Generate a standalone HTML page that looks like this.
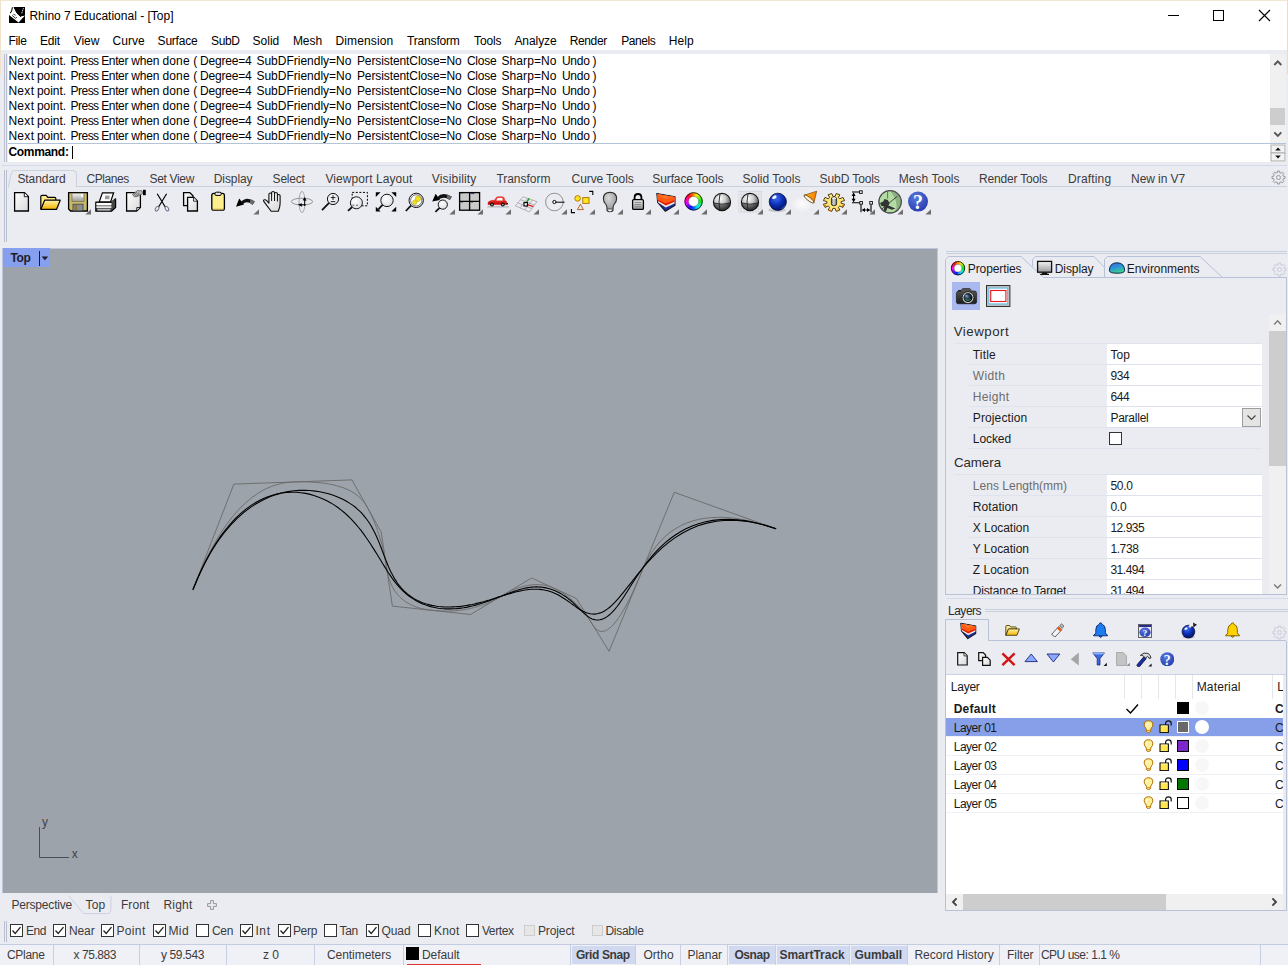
<!DOCTYPE html><html><head><meta charset="utf-8"><title>Rhino 7 Educational - [Top]</title><style>
html,body{margin:0;padding:0}body{width:1288px;height:965px;position:relative;overflow:hidden;background:#ebecf1;font-family:"Liberation Sans", sans-serif;font-size:12px}
body>div,body>svg,body>span{position:absolute;display:block}
span.t{white-space:pre;line-height:14px;height:14px}
</style></head><body>
<div style="left:0px;top:0px;width:1288px;height:50px;background:#fff;"></div>
<div style="left:0px;top:0px;width:1288px;height:1px;background:#f3e6d3;"></div>
<div style="left:0px;top:0px;width:1px;height:74px;background:#f1e2cc;"></div>
<div style="left:1287px;top:0px;width:1px;height:74px;background:#eadcc8;"></div>
<svg style="left:1160px;top:5px;" width="120" height="22" viewBox="0 0 120 22"><path d="M8 10.5H19" stroke="#000" stroke-width="1" fill="none"/><rect x="53.5" y="5.5" width="10" height="10" fill="none" stroke="#000"/><path d="M99 5L110 16M110 5L99 16" stroke="#000" stroke-width="1.1" fill="none"/></svg>
<div style="left:4px;top:54px;width:1px;height:108px;background:#b9bfce;"></div>
<div style="left:6px;top:54px;width:1px;height:108px;background:#b9bfce;"></div>
<div style="left:8px;top:54px;width:1278px;height:90px;background:#fff;"></div>
<div style="left:8px;top:143px;width:1278px;height:1px;background:#b4c4d8;"></div>
<div style="left:8px;top:144px;width:1278px;height:18px;background:#fff;"></div>
<div style="left:72px;top:146px;width:1px;height:13px;background:#000;"></div>
<div style="left:1270px;top:54px;width:16px;height:89px;background:#f0f0f0;"></div>
<div style="left:1270px;top:108px;width:15px;height:17px;background:#cdcdcd;"></div>
<svg style="left:1270px;top:54px;" width="16" height="89" viewBox="0 0 16 89"><path d="M4.3 11L7.8 7.4L11.3 11" stroke="#555" stroke-width="1.9" fill="none"/><path d="M4.3 78.4L7.8 82L11.3 78.4" stroke="#555" stroke-width="1.9" fill="none"/></svg>
<svg style="left:1270px;top:144px;" width="16" height="18" viewBox="0 0 16 18"><rect x="1" y="1" width="14" height="8" fill="#f2f2f2" stroke="#adadad"/><rect x="1" y="9" width="14" height="8" fill="#f2f2f2" stroke="#adadad"/><path d="M5.2 6.6L8 3.4L10.8 6.6Z M5.2 11.4L8 14.6L10.8 11.4Z" fill="#111"/></svg>
<div style="left:2px;top:165px;width:1285px;height:1px;background:#d3dbeb;"></div>
<div style="left:4px;top:170px;width:1px;height:72px;background:#b9bfce;"></div>
<div style="left:6px;top:170px;width:1px;height:72px;background:#b9bfce;"></div>
<div style="left:76px;top:186px;width:1211px;height:1px;background:#c9d0de;"></div>
<svg style="left:8px;top:169px;" width="72" height="19" viewBox="0 0 72 19"><path d="M0.5 18.5 L0.5 17 L3.5 3.5 Q4.2 1.5 6.5 1.5 H65 Q68.5 1.5 68.5 5 V17.5" fill="none" stroke="#c9d0de"/></svg>
<div style="left:2px;top:248px;width:936px;height:645px;background:#bcc6de;"></div>
<div style="left:3px;top:249px;width:934px;height:643.5px;background:#9da3aa;"></div>
<div style="left:3px;top:248px;width:47px;height:19px;background:#869fee;"></div>
<div style="left:39px;top:251px;width:1px;height:15px;background:#1c1c28;"></div>
<svg style="left:41px;top:255px;" width="8" height="6" viewBox="0 0 8 6"><path d="M0.6 1.4H7.2L3.9 5.2Z" fill="#1c1c28"/></svg>
<div style="left:4px;top:921px;width:1px;height:21px;background:#b9bfce;"></div>
<div style="left:6px;top:921px;width:1px;height:21px;background:#b9bfce;"></div>
<div style="left:10px;top:924px;width:13px;height:13px;background:#fff;box-sizing:border-box;border:1px solid #333;"></div>
<svg style="left:10px;top:924px;" width="13" height="13" viewBox="0 0 13 13"><path d="M2.5 6.5L5.2 9.5L10.5 3.2" stroke="#222" stroke-width="1.3" fill="none"/></svg>
<div style="left:53px;top:924px;width:13px;height:13px;background:#fff;box-sizing:border-box;border:1px solid #333;"></div>
<svg style="left:53px;top:924px;" width="13" height="13" viewBox="0 0 13 13"><path d="M2.5 6.5L5.2 9.5L10.5 3.2" stroke="#222" stroke-width="1.3" fill="none"/></svg>
<div style="left:101px;top:924px;width:13px;height:13px;background:#fff;box-sizing:border-box;border:1px solid #333;"></div>
<svg style="left:101px;top:924px;" width="13" height="13" viewBox="0 0 13 13"><path d="M2.5 6.5L5.2 9.5L10.5 3.2" stroke="#222" stroke-width="1.3" fill="none"/></svg>
<div style="left:152.5px;top:924px;width:13px;height:13px;background:#fff;box-sizing:border-box;border:1px solid #333;"></div>
<svg style="left:152.5px;top:924px;" width="13" height="13" viewBox="0 0 13 13"><path d="M2.5 6.5L5.2 9.5L10.5 3.2" stroke="#222" stroke-width="1.3" fill="none"/></svg>
<div style="left:196px;top:924px;width:13px;height:13px;background:#fff;box-sizing:border-box;border:1px solid #333;"></div>
<div style="left:240px;top:924px;width:13px;height:13px;background:#fff;box-sizing:border-box;border:1px solid #333;"></div>
<svg style="left:240px;top:924px;" width="13" height="13" viewBox="0 0 13 13"><path d="M2.5 6.5L5.2 9.5L10.5 3.2" stroke="#222" stroke-width="1.3" fill="none"/></svg>
<div style="left:277.5px;top:924px;width:13px;height:13px;background:#fff;box-sizing:border-box;border:1px solid #333;"></div>
<svg style="left:277.5px;top:924px;" width="13" height="13" viewBox="0 0 13 13"><path d="M2.5 6.5L5.2 9.5L10.5 3.2" stroke="#222" stroke-width="1.3" fill="none"/></svg>
<div style="left:324px;top:924px;width:13px;height:13px;background:#fff;box-sizing:border-box;border:1px solid #333;"></div>
<div style="left:366px;top:924px;width:13px;height:13px;background:#fff;box-sizing:border-box;border:1px solid #333;"></div>
<svg style="left:366px;top:924px;" width="13" height="13" viewBox="0 0 13 13"><path d="M2.5 6.5L5.2 9.5L10.5 3.2" stroke="#222" stroke-width="1.3" fill="none"/></svg>
<div style="left:418px;top:924px;width:13px;height:13px;background:#fff;box-sizing:border-box;border:1px solid #333;"></div>
<div style="left:466px;top:924px;width:13px;height:13px;background:#fff;box-sizing:border-box;border:1px solid #333;"></div>
<div style="left:523.5px;top:925px;width:11px;height:11px;background:#e6e6e6;box-sizing:border-box;border:1px solid #cdcdcd;"></div>
<div style="left:592px;top:925px;width:11px;height:11px;background:#e6e6e6;box-sizing:border-box;border:1px solid #cdcdcd;"></div>
<div style="left:0px;top:945px;width:1288px;height:20px;background:#f0f1f6;"></div>
<div style="left:0px;top:944px;width:1288px;height:1px;background:#c4cce2;"></div>
<div style="left:572px;top:946px;width:63px;height:18px;background:#d0d9f0;"></div>
<div style="left:729px;top:946px;width:46px;height:18px;background:#d0d9f0;"></div>
<div style="left:777px;top:946px;width:72px;height:18px;background:#d0d9f0;"></div>
<div style="left:851px;top:946px;width:56px;height:18px;background:#d0d9f0;"></div>
<div style="left:53px;top:945px;width:1px;height:20px;background:#c8cfe2;"></div>
<div style="left:139px;top:945px;width:1px;height:20px;background:#c8cfe2;"></div>
<div style="left:226px;top:945px;width:1px;height:20px;background:#c8cfe2;"></div>
<div style="left:314px;top:945px;width:1px;height:20px;background:#c8cfe2;"></div>
<div style="left:403px;top:945px;width:1px;height:20px;background:#c8cfe2;"></div>
<div style="left:570px;top:945px;width:1px;height:20px;background:#c8cfe2;"></div>
<div style="left:635px;top:945px;width:1px;height:20px;background:#c8cfe2;"></div>
<div style="left:680px;top:945px;width:1px;height:20px;background:#c8cfe2;"></div>
<div style="left:727px;top:945px;width:1px;height:20px;background:#c8cfe2;"></div>
<div style="left:775px;top:945px;width:1px;height:20px;background:#c8cfe2;"></div>
<div style="left:849px;top:945px;width:1px;height:20px;background:#c8cfe2;"></div>
<div style="left:907px;top:945px;width:1px;height:20px;background:#c8cfe2;"></div>
<div style="left:999px;top:945px;width:1px;height:20px;background:#c8cfe2;"></div>
<div style="left:1039px;top:945px;width:1px;height:20px;background:#c8cfe2;"></div>
<div style="left:1260px;top:945px;width:1px;height:20px;background:#c8cfe2;"></div>
<div style="left:406px;top:947px;width:13px;height:13px;background:#000;"></div>
<div style="left:407px;top:963.5px;width:74px;height:1.5px;background:#e03030;"></div>
<div style="left:946px;top:251px;width:341px;height:1px;background:#c9d0de;"></div>
<div style="left:946px;top:253px;width:341px;height:1px;background:#c9d0de;"></div>
<svg style="left:945px;top:255px;" width="343" height="24" viewBox="0 0 343 24"><path d="M0.5 23 V4.4 L3.4 1.5 H76 L98.5 22.5 H341" fill="none" stroke="#b7c2d9"/><path d="M87.5 11.5 V4.4 L90.4 1.5 H149 L160 13" fill="none" stroke="#b7c2d9"/><path d="M159.5 22 V4.4 L162.4 1.5 H255 L277.5 22.5" fill="none" stroke="#b7c2d9"/></svg>
<div style="left:945px;top:277px;width:1px;height:317px;background:#b7c2d9;"></div>
<div style="left:1286px;top:277px;width:1px;height:317px;background:#b7c2d9;"></div>
<div style="left:945px;top:594px;width:342px;height:1px;background:#b7c2d9;"></div>
<div style="left:952px;top:282px;width:28px;height:28px;background:#a9b8ee;"></div>
<div style="left:954px;top:343px;width:308px;height:1px;background:#dfe3ee;"></div>
<div style="left:1107px;top:344px;width:155px;height:20px;background:#fff;"></div>
<div style="left:969px;top:364px;width:293px;height:1px;background:#dfe3ee;"></div>
<div style="left:1107px;top:365px;width:155px;height:20px;background:#fff;"></div>
<div style="left:969px;top:385px;width:293px;height:1px;background:#dfe3ee;"></div>
<div style="left:1107px;top:386px;width:155px;height:20px;background:#fff;"></div>
<div style="left:969px;top:406px;width:293px;height:1px;background:#dfe3ee;"></div>
<div style="left:1107px;top:407px;width:155px;height:20px;background:#fff;"></div>
<div style="left:969px;top:427px;width:293px;height:1px;background:#dfe3ee;"></div>
<div style="left:1107px;top:428px;width:155px;height:20px;background:#fff;"></div>
<div style="left:969px;top:448px;width:293px;height:1px;background:#dfe3ee;"></div>
<div style="left:1107px;top:428px;width:155px;height:20px;background:#ebecf1;"></div>
<div style="left:954px;top:474px;width:308px;height:1px;background:#dfe3ee;"></div>
<div style="left:1107px;top:475px;width:155px;height:20px;background:#fff;"></div>
<div style="left:969px;top:495px;width:293px;height:1px;background:#dfe3ee;"></div>
<div style="left:1107px;top:496px;width:155px;height:20px;background:#fff;"></div>
<div style="left:969px;top:516px;width:293px;height:1px;background:#dfe3ee;"></div>
<div style="left:1107px;top:517px;width:155px;height:20px;background:#fff;"></div>
<div style="left:969px;top:537px;width:293px;height:1px;background:#dfe3ee;"></div>
<div style="left:1107px;top:538px;width:155px;height:20px;background:#fff;"></div>
<div style="left:969px;top:558px;width:293px;height:1px;background:#dfe3ee;"></div>
<div style="left:1107px;top:559px;width:155px;height:20px;background:#fff;"></div>
<div style="left:969px;top:579px;width:293px;height:1px;background:#dfe3ee;"></div>
<div style="left:1107px;top:580px;width:155px;height:20px;background:#fff;"></div>
<div style="left:969px;top:600px;width:293px;height:1px;background:#dfe3ee;"></div>
<div style="left:946px;top:594px;width:341px;height:8px;background:#ebecf1;"></div>
<div style="left:945px;top:594px;width:342px;height:1px;background:#b7c2d9;"></div>
<div style="left:1242px;top:408px;width:19px;height:19px;background:#e4e4e4;box-sizing:border-box;border:1px solid #9c9c9c;"></div>
<svg style="left:1242px;top:408px;" width="19" height="19" viewBox="0 0 19 19"><path d="M5.5 7.5L9.5 11.5L13.5 7.5" fill="none" stroke="#444" stroke-width="1.2"/></svg>
<div style="left:1109px;top:432px;width:13px;height:13px;background:#fff;box-sizing:border-box;border:1px solid #333;"></div>
<div style="left:1269px;top:314px;width:17px;height:280px;background:#f0f0f0;"></div>
<div style="left:1269px;top:331px;width:17px;height:135px;background:#cdcdcd;"></div>
<svg style="left:1269px;top:314px;" width="17" height="280" viewBox="0 0 17 280"><path d="M5.2 10.4L8.6 6.8L12 10.4" stroke="#7a7a7a" stroke-width="1.4" fill="none"/><path d="M5.2 270.4L8.6 274L12 270.4" stroke="#7a7a7a" stroke-width="1.4" fill="none"/></svg>
<div style="left:985px;top:609px;width:303px;height:1px;background:#c9d0de;"></div>
<div style="left:985px;top:611px;width:303px;height:1px;background:#c9d0de;"></div>
<div style="left:946px;top:598px;width:342px;height:1px;background:#d5dbea;"></div>
<svg style="left:945px;top:618px;" width="343" height="24" viewBox="0 0 343 24"><path d="M0.5 23 V1.5 H43.5 V22.5 H341" fill="none" stroke="#b7c2d9"/></svg>
<div style="left:945px;top:641px;width:1px;height:269px;background:#b7c2d9;"></div>
<div style="left:1286px;top:641px;width:1px;height:269px;background:#b7c2d9;"></div>
<div style="left:945px;top:910px;width:342px;height:1px;background:#b7c2d9;"></div>
<div style="left:946px;top:675px;width:337px;height:219px;background:#fff;"></div>
<div style="left:946px;top:674px;width:340px;height:1px;background:#c9d3e6;"></div>
<div style="left:1124px;top:675px;width:1px;height:24px;background:#e4e6ec;"></div>
<div style="left:1140.5px;top:675px;width:1px;height:24px;background:#e4e6ec;"></div>
<div style="left:1157.5px;top:675px;width:1px;height:24px;background:#e4e6ec;"></div>
<div style="left:1174.5px;top:675px;width:1px;height:24px;background:#e4e6ec;"></div>
<div style="left:1191.5px;top:675px;width:1px;height:24px;background:#e4e6ec;"></div>
<div style="left:1272px;top:675px;width:1px;height:24px;background:#e4e6ec;"></div>
<div style="left:946px;top:718px;width:337px;height:18px;background:#869fe8;"></div>
<div style="left:1177px;top:702px;width:12px;height:12px;background:#000;box-sizing:border-box;border:1px solid #000;"></div>
<div style="left:1194.5px;top:701px;width:14px;height:14px;background:#f7f7f7;border-radius:50%;"></div>
<div style="left:946px;top:736px;width:337px;height:1px;background:#eef0f6;"></div>
<div style="left:1177px;top:721px;width:12px;height:12px;background:#696969;box-sizing:border-box;border:1px solid #fff;"></div>
<div style="left:1194.5px;top:720px;width:14px;height:14px;background:#fff;border-radius:50%;"></div>
<div style="left:946px;top:755px;width:337px;height:1px;background:#eef0f6;"></div>
<div style="left:1177px;top:740px;width:12px;height:12px;background:#7d26cd;box-sizing:border-box;border:1px solid #000;"></div>
<div style="left:1194.5px;top:739px;width:14px;height:14px;background:#f7f7f7;border-radius:50%;"></div>
<div style="left:946px;top:774px;width:337px;height:1px;background:#eef0f6;"></div>
<div style="left:1177px;top:759px;width:12px;height:12px;background:#0000ff;box-sizing:border-box;border:1px solid #000;"></div>
<div style="left:1194.5px;top:758px;width:14px;height:14px;background:#f7f7f7;border-radius:50%;"></div>
<div style="left:946px;top:793px;width:337px;height:1px;background:#eef0f6;"></div>
<div style="left:1177px;top:778px;width:12px;height:12px;background:#007800;box-sizing:border-box;border:1px solid #000;"></div>
<div style="left:1194.5px;top:777px;width:14px;height:14px;background:#f7f7f7;border-radius:50%;"></div>
<div style="left:946px;top:812px;width:337px;height:1px;background:#eef0f6;"></div>
<div style="left:1177px;top:797px;width:12px;height:12px;background:#ffffff;box-sizing:border-box;border:1px solid #000;"></div>
<div style="left:1194.5px;top:796px;width:14px;height:14px;background:#f7f7f7;border-radius:50%;"></div>
<div style="left:1286px;top:641px;width:1px;height:269px;background:#b7c2d9;"></div>
<svg style="left:1125px;top:702px;" width="15" height="13" viewBox="0 0 15 13"><path d="M1.5 7L5.5 11L13 2.5" fill="none" stroke="#000" stroke-width="1.4"/></svg>
<div style="left:946px;top:894px;width:337px;height:16px;background:#f0f0f0;"></div>
<div style="left:963px;top:894px;width:202.5px;height:16px;background:#cdcdcd;"></div>
<svg style="left:946px;top:894px;" width="337" height="16" viewBox="0 0 337 16"><path d="M10.6 4.4L7 8L10.6 11.6" stroke="#444" stroke-width="1.9" fill="none"/><path d="M326.4 4.4L330 8L326.4 11.6" stroke="#444" stroke-width="1.9" fill="none"/></svg>
<svg style="left:0;top:0" width="0" height="0"><defs>
<linearGradient id="gPage" x1="0" y1="0" x2="1" y2="1"><stop offset="0" stop-color="#fff"/><stop offset="1" stop-color="#d8d8d8"/></linearGradient>
<linearGradient id="gFold" x1="0" y1="0" x2="0" y2="1"><stop offset="0" stop-color="#fff3a8"/><stop offset="1" stop-color="#f5b400"/></linearGradient>
<linearGradient id="gGrey" x1="0" y1="0" x2="0" y2="1"><stop offset="0" stop-color="#f4f4f4"/><stop offset="1" stop-color="#9a9a9a"/></linearGradient>
<radialGradient id="gSph" cx="0.38" cy="0.3" r="0.75"><stop offset="0" stop-color="#fff"/><stop offset="0.45" stop-color="#c8c8c8"/><stop offset="1" stop-color="#3a3a3a"/></radialGradient>
<radialGradient id="gBlue" cx="0.4" cy="0.3" r="0.8"><stop offset="0" stop-color="#3d6df0"/><stop offset="0.5" stop-color="#0a2db4"/><stop offset="1" stop-color="#020a50"/></radialGradient>
<radialGradient id="gHelp" cx="0.4" cy="0.3" r="0.8"><stop offset="0" stop-color="#5a78e0"/><stop offset="1" stop-color="#2238a8"/></radialGradient>
<radialGradient id="gBulb" cx="0.4" cy="0.3" r="0.8"><stop offset="0" stop-color="#d8d8d8"/><stop offset="1" stop-color="#8c8c8c"/></radialGradient>
<radialGradient id="gLens" cx="0.4" cy="0.35" r="0.7"><stop offset="0" stop-color="#fff"/><stop offset="1" stop-color="#d9dbe0"/></radialGradient>
<linearGradient id="gCar" x1="0" y1="0" x2="0" y2="1"><stop offset="0" stop-color="#ff5a4a"/><stop offset="1" stop-color="#c80000"/></linearGradient>
<linearGradient id="gCone" x1="0" y1="0" x2="1" y2="0.3"><stop offset="0" stop-color="#ffc21a"/><stop offset="1" stop-color="#ff7a00"/></linearGradient>
<linearGradient id="gCyl" x1="0" y1="0" x2="1" y2="0"><stop offset="0" stop-color="#6a6a6a"/><stop offset="0.45" stop-color="#d8d8d8"/><stop offset="1" stop-color="#6a6a6a"/></linearGradient>
<radialGradient id="gGlow" cx="0.5" cy="0.5" r="0.5"><stop offset="0" stop-color="#fff" stop-opacity="0.9"/><stop offset="1" stop-color="#fff" stop-opacity="0"/></radialGradient>
<pattern id="pDots" x="0" y="0" width="2.9" height="2.9" patternUnits="userSpaceOnUse"><rect x="0.4" y="0.4" width="1.9" height="1.9" rx="0.5" fill="#cdd0d7"/></pattern>
</defs></svg>
<svg style="left:7px;top:188px;overflow:visible;" width="30" height="28" viewBox="-2 -2 30 28"><path d="M5.6 2.6H15.5L19.4 6.5V21H5.6Z" fill="url(#gPage)" stroke="#000" stroke-width="1.3" stroke-linejoin="miter"/><path d="M15.3 2.8V6.7H19.2" fill="#fff" stroke="#000" stroke-width="0.9"/></svg>
<svg style="left:35px;top:188px;overflow:visible;" width="30" height="28" viewBox="-2 -2 30 28"><path d="M3.8 19.2V6.6Q3.8 5.4 5 5.4H9.2L10.8 7.4H17.6Q18.8 7.4 18.8 8.6V10" fill="#ffe98a" stroke="#000" stroke-width="1.2"/><path d="M3.9 19.3L7.6 10.2H23.2L19.6 19.3Z" fill="url(#gFold)" stroke="#000" stroke-width="1.2" stroke-linejoin="round"/></svg>
<svg style="left:63px;top:188px;overflow:visible;" width="30" height="28" viewBox="-2 -2 30 28"><path d="M3.6 2.6H22.4V21H5.6L3.6 19Z" fill="#c9b96a" stroke="#000" stroke-width="1.3"/><rect x="7" y="3.2" width="12" height="8.2" fill="url(#gGrey)" stroke="#6b6030" stroke-width="0.6"/><rect x="16.2" y="4" width="1.6" height="3" fill="#fff"/><rect x="8" y="14.2" width="10" height="6.6" fill="#8a8f96" stroke="#3c3c3c" stroke-width="0.8"/><rect x="9.6" y="15.4" width="2.6" height="4.6" fill="#8c7a2a"/><path d="M26 19.3V24.5H20.4Z" fill="#6e6e6e"/></svg>
<svg style="left:91px;top:188px;overflow:visible;" width="30" height="28" viewBox="-2 -2 30 28"><path d="M6.2 12L9.4 2.8H20.6L17.6 12Z" fill="#fff" stroke="#000" stroke-width="1.2"/><rect x="12" y="5.6" width="4.5" height="3.6" fill="#9a9a9a"/><path d="M2.8 12.2H18.4L22.6 8.8V17.6L18.4 21.2H2.8Z" fill="#444" stroke="#000" stroke-width="1.2" stroke-linejoin="round"/><rect x="3.4" y="13" width="15" height="2.4" fill="#fff"/><rect x="3.4" y="16.2" width="15" height="1.8" fill="#e8e8e8"/><rect x="4.4" y="18.8" width="13" height="1.8" fill="#bcbcbc"/><path d="M18.6 12.4L22.4 9.4" stroke="#777" stroke-width="0.8"/></svg>
<svg style="left:119px;top:188px;overflow:visible;" width="30" height="28" viewBox="-2 -2 30 28"><path d="M5.6 2.6H19.4V17.4L15.6 21H5.6Z" fill="url(#gPage)" stroke="#000" stroke-width="1.3"/><path d="M15.8 20.6V17.6H19" fill="#fff" stroke="#000" stroke-width="0.9"/><path d="M11.5 4.4L16.4 0.6L21 0.8L22 3.4L16.5 6.4L13.5 7Z" fill="#b9b9b9" stroke="#555" stroke-width="0.7"/><path d="M12.5 5.2L16 2.2M14 6L17.8 2.8M15.5 6.4L19 3.6" stroke="#444" stroke-width="0.6"/><rect x="22" y="-0.2" width="2.8" height="5.4" fill="#000"/></svg>
<svg style="left:147px;top:188px;overflow:visible;" width="30" height="28" viewBox="-2 -2 30 28"><path d="M8.2 3.8L16.4 17.2M17.6 3.8L9.4 17.2" stroke="#000" stroke-width="1.2" fill="none"/><ellipse cx="8.1" cy="18.6" rx="1.5" ry="2.6" transform="rotate(32 8.1 18.6)" fill="none" stroke="#666b80" stroke-width="0.9"/><ellipse cx="17.9" cy="18.6" rx="1.5" ry="2.6" transform="rotate(-32 17.9 18.6)" fill="none" stroke="#666b80" stroke-width="0.9"/><circle cx="12.9" cy="11.6" r="0.9" fill="#223"/></svg>
<svg style="left:175px;top:188px;overflow:visible;" width="30" height="28" viewBox="-2 -2 30 28"><path d="M6.6 2.6H12.8L16 5.8V15.6H6.6Z" fill="url(#gPage)" stroke="#000" stroke-width="1.3"/><path d="M10.6 7.4H16.8L20.4 11V21H10.6Z" fill="url(#gPage)" stroke="#000" stroke-width="1.3"/><path d="M16.6 7.6V11.2H20.2" fill="#fff" stroke="#000" stroke-width="0.8"/></svg>
<svg style="left:203px;top:188px;overflow:visible;" width="30" height="28" viewBox="-2 -2 30 28"><rect x="6.8" y="3.4" width="12.6" height="16.8" rx="2" fill="#fdee8e" stroke="#000" stroke-width="1.3"/><path d="M10 3.6Q10 2.2 11.4 2.2H14.8Q16.2 2.2 16.2 3.6V4.6Q16.2 5.4 15.2 5.4H11Q10 5.4 10 4.6Z" fill="#e8e8e8" stroke="#000" stroke-width="1"/><path d="M7.6 19.2H18.6" stroke="#cdb24a" stroke-width="1"/></svg>
<svg style="left:231px;top:188px;overflow:visible;" width="30" height="28" viewBox="-2 -2 30 28"><path d="M3 16.8L6.2 8.4L11 14.6Z" fill="#000"/><path d="M7.6 12.2Q13.4 5.4 21.8 11.6L19.6 14.8Q13.6 10.2 9.8 14.2Z" fill="#111"/><path d="M17.6 9.3Q19.8 10.2 21.8 11.6L19.6 14.8Q18.4 13.8 16.6 13Z" fill="#6a6a6a"/><path d="M26 19.3V24.5H20.4Z" fill="#6e6e6e"/></svg>
<svg style="left:259px;top:188px;overflow:visible;" width="30" height="28" viewBox="-2 -2 30 28"><g transform="translate(-0.6 0) scale(1.12 1)"><path d="M9.6 21.2L3 11.4Q2.4 10.2 3.4 9.8Q4.6 9.4 5.6 10.6L7.6 13.2V4.4Q7.6 3 8.8 3Q10 3 10 4.4V2.8Q10 1.4 11.3 1.4Q12.6 1.4 12.6 2.8V3.6Q12.6 2.4 13.9 2.4Q15.2 2.4 15.2 3.8V5.4Q15.2 4.4 16.4 4.4Q17.6 4.4 17.6 5.8V13.2Q17.6 17 16 21.2Z" fill="url(#gPage)" stroke="#111" stroke-width="1" stroke-linejoin="round"/><path d="M10 4.4V11M12.6 3.6V11M15.2 5.4V11.4" stroke="#111" stroke-width="0.9"/></g></svg>
<svg style="left:287px;top:188px;overflow:visible;" width="30" height="28" viewBox="-2 -2 30 28"><ellipse cx="13" cy="11.6" rx="10.6" ry="3.4" fill="none" stroke="#6e6e6e" stroke-width="0.7"/><ellipse cx="13" cy="12" rx="3" ry="10.6" fill="none" stroke="#8a8a8a" stroke-width="0.7"/><path d="M13.6 10.2L15.8 7L17.6 10.8Z" fill="#000"/><path d="M8.8 14.6L12.8 13.2V16.8Z" fill="#000"/><path d="M15.6 9V16M11 14.8H17" stroke="#000" stroke-width="0.9"/></svg>
<svg style="left:315px;top:188px;overflow:visible;" width="30" height="28" viewBox="-2 -2 30 28"><path d="M12.1 12.9L5 20.2" stroke="#111" stroke-width="1.8" fill="none"/><circle cx="16" cy="9" r="5.6" fill="url(#gLens)" stroke="#161616" stroke-width="1"/><path d="M13.6 7.6H18.4M16 5.2V10M13.8 11.6H18.2" stroke="#111" stroke-width="0.9"/></svg>
<svg style="left:343px;top:188px;overflow:visible;" width="30" height="28" viewBox="-2 -2 30 28"><rect x="7.2" y="2.4" width="15.2" height="13.4" fill="none" stroke="#000" stroke-width="1" stroke-dasharray="2 1.6"/><path d="M7.2 17.0L3 20.8" stroke="#111" stroke-width="1.8" fill="none"/><circle cx="11.4" cy="12.8" r="6" fill="url(#gLens)" stroke="#161616" stroke-width="1"/><path d="M7.4 15.2H9.4M11 15.2H13" stroke="#444" stroke-width="0.8"/></svg>
<svg style="left:371px;top:188px;overflow:visible;" width="30" height="28" viewBox="-2 -2 30 28"><path d="M2.8 2.2H7.6L2.8 7Z M23.2 2.2V7L18.4 2.2Z M2.8 21.6V16.8L7.6 21.6Z M23.2 21.6H18.4L23.2 16.8Z" fill="#000"/><path d="M9.7 14.7L5.4 19.4" stroke="#111" stroke-width="1.8" fill="none"/><circle cx="14" cy="10.4" r="6.2" fill="url(#gLens)" stroke="#161616" stroke-width="1"/></svg>
<svg style="left:399px;top:188px;overflow:visible;" width="30" height="28" viewBox="-2 -2 30 28"><path d="M10.2 15.4L4.8 21" stroke="#111" stroke-width="1.8" fill="none"/><circle cx="15.2" cy="10.4" r="7.2" fill="url(#gLens)" stroke="#161616" stroke-width="1"/><circle cx="15.2" cy="10.4" r="5.6" fill="#fff" stroke="#222" stroke-width="0.6"/><circle cx="16.8" cy="8.8" r="2.7" fill="#f2e01a" stroke="#b8a400" stroke-width="0.5"/><circle cx="13.8" cy="12.2" r="2.2" fill="#f2e01a" stroke="#b8a400" stroke-width="0.5"/></svg>
<svg style="left:427px;top:188px;overflow:visible;" width="30" height="28" viewBox="-2 -2 30 28"><path d="M3.2 11.6L6.6 3.8L11 10Z" fill="#000"/><path d="M7.8 7.4Q14 1 22.8 6.8L20.8 10Q14.8 5.6 9.8 9.4Z" fill="#111"/><path d="M18.4 4.4Q20.8 5.4 22.8 6.8L20.8 10Q19.4 9 17.6 8.2Z" fill="#6a6a6a"/><path d="M10.6 17.8L6.4 21.8" stroke="#111" stroke-width="1.8" fill="none"/><circle cx="13.8" cy="14.6" r="4.6" fill="url(#gLens)" stroke="#161616" stroke-width="1"/><path d="M26 19.3V24.5H20.4Z" fill="#6e6e6e"/></svg>
<svg style="left:455px;top:188px;overflow:visible;" width="30" height="28" viewBox="-2 -2 30 28"><rect x="2.6" y="2.6" width="20" height="17.6" fill="#c9c9c9" stroke="#000" stroke-width="1.3"/><path d="M12.6 2.6V20.2M2.6 11.4H22.6" stroke="#000" stroke-width="1.3"/><rect x="13.6" y="3.2" width="3.6" height="0.9" fill="#1a2a9a"/><rect x="3.6" y="3.2" width="2.4" height="0.6" fill="#555"/><rect x="3.6" y="12.2" width="2.4" height="0.6" fill="#555"/><rect x="13.6" y="12.2" width="2.4" height="0.6" fill="#555"/><path d="M26 19.3V24.5H20.4Z" fill="#6e6e6e"/></svg>
<svg style="left:483px;top:188px;overflow:visible;" width="30" height="28" viewBox="-2 -2 30 28"><path d="M2.4 16.9H24" stroke="#9a9a9a" stroke-width="0.8"/><path d="M3 14.6Q2.4 11.4 5.6 10.8L9.6 10.2L11.4 7.4Q11.8 6.8 12.8 6.8H17.4Q18.6 6.8 19 7.8L19.8 10.6Q21.8 11 21.8 13V14.6Z" fill="url(#gCar)" stroke="#d80000" stroke-width="0.5"/><path d="M12.6 8H17.2L17.8 10.4H11.2Z" fill="#fff"/><circle cx="7" cy="14.6" r="2" fill="#111"/><circle cx="7" cy="14.6" r="0.9" fill="#aaa"/><circle cx="17.8" cy="14.6" r="2" fill="#111"/><circle cx="17.8" cy="14.6" r="0.9" fill="#aaa"/><rect x="21.4" y="13" width="1.6" height="1.4" fill="#111"/><path d="M26 19.3V24.5H20.4Z" fill="#6e6e6e"/></svg>
<svg style="left:511px;top:188px;overflow:visible;" width="30" height="28" viewBox="-2 -2 30 28"><path d="M10 6.8L24 11.6L16.4 22L2.4 15.8Z M7.4 9.8L21.4 15M4.8 12.8L18.8 18.6M14.6 8.4L7 17.8M19.4 10L11.6 19.8" fill="none" stroke="#8d8d8d" stroke-width="0.6"/><path d="M12.8 13.6L16.2 8.4" stroke="#1e9a1e" stroke-width="1.4"/><path d="M13.6 14.4L20.4 16.6" stroke="#d22" stroke-width="1.4"/><rect x="11" y="12.6" width="3.4" height="3.4" fill="#fff" stroke="#000" stroke-width="1.1"/><path d="M26 19.3V24.5H20.4Z" fill="#6e6e6e"/></svg>
<svg style="left:539px;top:188px;overflow:visible;" width="30" height="28" viewBox="-2 -2 30 28"><circle cx="13.4" cy="12" r="8.8" fill="none" stroke="#787878" stroke-width="0.8"/><path d="M13.4 12.2H23.6" stroke="#000" stroke-width="1"/><circle cx="13.4" cy="12" r="1.6" fill="#fff" stroke="#000" stroke-width="1"/><path d="M26 19.3V24.5H20.4Z" fill="#6e6e6e"/></svg>
<svg style="left:567px;top:188px;overflow:visible;" width="30" height="28" viewBox="-2 -2 30 28"><path d="M20.2 1.4H23.8V5 M2.4 19V22.6H6" fill="none" stroke="#000" stroke-width="1.1"/><circle cx="8.6" cy="8.4" r="2.8" fill="#ffe81a" stroke="#b06a00" stroke-width="0.9"/><rect x="13.8" y="7.6" width="6.2" height="5.8" fill="#ffe81a" stroke="#b06a00" stroke-width="0.9"/><path d="M11.4 14.2L14.4 19.6H8.4Z" fill="none" stroke="#b05a10" stroke-width="0.9"/><path d="M26 19.3V24.5H20.4Z" fill="#6e6e6e"/></svg>
<svg style="left:595px;top:188px;overflow:visible;" width="30" height="28" viewBox="-2 -2 30 28"><path d="M13 2.4Q19.6 2.4 19.6 8.8Q19.6 11.6 17.4 14Q16 15.6 16 18V20Q16 21.6 13 21.6Q10 21.6 10 20V18Q10 15.6 8.6 14Q6.4 11.6 6.4 8.8Q6.4 2.4 13 2.4Z" fill="url(#gBulb)" stroke="#2e2e2e" stroke-width="1.1"/><path d="M10.4 18.4H15.6" stroke="#555" stroke-width="0.7"/><ellipse cx="13" cy="20.6" rx="1.8" ry="0.8" fill="#fff"/><path d="M26 19.3V24.5H20.4Z" fill="#6e6e6e"/></svg>
<svg style="left:623px;top:188px;overflow:visible;" width="30" height="28" viewBox="-2 -2 30 28"><path d="M9.6 10V7.4Q9.6 4 13 4Q16.4 4 16.4 7.4V10" fill="none" stroke="#000" stroke-width="1.8"/><rect x="7.6" y="9.6" width="10.8" height="9.8" rx="1.2" fill="url(#gGrey)" stroke="#000" stroke-width="1.3"/><path d="M9.6 12.4H16.4M9.6 14.6H16.4M9.6 16.8H16.4" stroke="#777" stroke-width="0.9"/><path d="M26 19.3V24.5H20.4Z" fill="#6e6e6e"/></svg>
<svg style="left:651px;top:188px;overflow:visible;" width="30" height="28" viewBox="-2 -2 30 28"><path d="M3.8 3.5L22.0 6.7L22.0 15.4L12.4 21.3L4.7 12.4Z" fill="#1a2f9c" stroke="#15151f" stroke-width="1.1" stroke-linejoin="round"/><path d="M4.2 4.0L21.6 7.1L21.6 13.5L12.7 17.4L5.1 12.4Z" fill="#ececec"/><path d="M4.2 4.0L21.6 7.1L21.6 11.7L12.9 15.4L4.9 11.0Z" fill="#e61a00"/><path d="M4.2 4.0L21.6 7.1L21.6 9.9L12.9 13.5L4.7 9.4Z" fill="#ff5a12"/><path d="M4.5 4.4L20.2 7.2L12.0 8.8Z" fill="#ff7a2a" opacity="0.8"/><path d="M26 19.3V24.5H20.4Z" fill="#6e6e6e"/></svg>
<svg style="left:679px;top:188px;overflow:visible;" width="30" height="28" viewBox="-2 -2 30 28"><path d="M12.6 11.4L7.37 4.08A9 9 0 0 1 9.05 3.13Z" fill="#ff1300"/><path d="M12.6 11.4L8.72 3.28A9 9 0 0 1 10.54 2.64Z" fill="#ff3a00"/><path d="M12.6 11.4L10.19 2.73A9 9 0 0 1 12.09 2.41Z" fill="#ff6100"/><path d="M12.6 11.4L11.73 2.44A9 9 0 0 1 13.66 2.46Z" fill="#ff8900"/><path d="M12.6 11.4L13.30 2.43A9 9 0 0 1 15.20 2.78Z" fill="#ffb000"/><path d="M12.6 11.4L14.85 2.69A9 9 0 0 1 16.65 3.36Z" fill="#ffd700"/><path d="M12.6 11.4L16.33 3.21A9 9 0 0 1 17.99 4.19Z" fill="#e9eb00"/><path d="M12.6 11.4L17.69 3.98A9 9 0 0 1 19.16 5.24Z" fill="#bfeb00"/><path d="M12.6 11.4L18.91 4.98A9 9 0 0 1 20.13 6.47Z" fill="#94eb00"/><path d="M12.6 11.4L19.92 6.17A9 9 0 0 1 20.87 7.85Z" fill="#6aeb00"/><path d="M12.6 11.4L20.72 7.52A9 9 0 0 1 21.36 9.34Z" fill="#3feb00"/><path d="M12.6 11.4L21.27 8.99A9 9 0 0 1 21.59 10.89Z" fill="#15eb00"/><path d="M12.6 11.4L21.56 10.53A9 9 0 0 1 21.54 12.46Z" fill="#00eb15"/><path d="M12.6 11.4L21.57 12.10A9 9 0 0 1 21.22 14.00Z" fill="#00eb3f"/><path d="M12.6 11.4L21.31 13.65A9 9 0 0 1 20.64 15.45Z" fill="#00eb6a"/><path d="M12.6 11.4L20.79 15.13A9 9 0 0 1 19.81 16.79Z" fill="#00eb94"/><path d="M12.6 11.4L20.02 16.49A9 9 0 0 1 18.76 17.96Z" fill="#00ebbf"/><path d="M12.6 11.4L19.02 17.71A9 9 0 0 1 17.53 18.93Z" fill="#00ebe9"/><path d="M12.6 11.4L17.83 18.72A9 9 0 0 1 16.15 19.67Z" fill="#00d7ff"/><path d="M12.6 11.4L16.48 19.52A9 9 0 0 1 14.66 20.16Z" fill="#00b0ff"/><path d="M12.6 11.4L15.01 20.07A9 9 0 0 1 13.11 20.39Z" fill="#0089ff"/><path d="M12.6 11.4L13.47 20.36A9 9 0 0 1 11.54 20.34Z" fill="#0061ff"/><path d="M12.6 11.4L11.90 20.37A9 9 0 0 1 10.00 20.02Z" fill="#003aff"/><path d="M12.6 11.4L10.35 20.11A9 9 0 0 1 8.55 19.44Z" fill="#0013ff"/><path d="M12.6 11.4L8.87 19.59A9 9 0 0 1 7.21 18.61Z" fill="#1500ff"/><path d="M12.6 11.4L7.51 18.82A9 9 0 0 1 6.04 17.56Z" fill="#3f00ff"/><path d="M12.6 11.4L6.29 17.82A9 9 0 0 1 5.07 16.33Z" fill="#6a00ff"/><path d="M12.6 11.4L5.28 16.63A9 9 0 0 1 4.33 14.95Z" fill="#9400ff"/><path d="M12.6 11.4L4.48 15.28A9 9 0 0 1 3.84 13.46Z" fill="#bf00ff"/><path d="M12.6 11.4L3.93 13.81A9 9 0 0 1 3.61 11.91Z" fill="#e900ff"/><path d="M12.6 11.4L3.64 12.27A9 9 0 0 1 3.66 10.34Z" fill="#ff00e9"/><path d="M12.6 11.4L3.63 10.70A9 9 0 0 1 3.98 8.80Z" fill="#ff00bf"/><path d="M12.6 11.4L3.89 9.15A9 9 0 0 1 4.56 7.35Z" fill="#ff0094"/><path d="M12.6 11.4L4.41 7.67A9 9 0 0 1 5.39 6.01Z" fill="#ff006a"/><path d="M12.6 11.4L5.18 6.31A9 9 0 0 1 6.44 4.84Z" fill="#ff003f"/><path d="M12.6 11.4L6.18 5.09A9 9 0 0 1 7.67 3.87Z" fill="#ff0015"/><circle cx="12.6" cy="11.4" r="8.7" fill="none" stroke="#1a1a1a" stroke-width="0.9"/><circle cx="12.6" cy="11.4" r="5" fill="#fff" stroke="#444" stroke-width="0.4"/><path d="M26 19.3V24.5H20.4Z" fill="#6e6e6e"/></svg>
<svg style="left:707px;top:188px;overflow:visible;" width="30" height="28" viewBox="-2 -2 30 28"><circle cx="13" cy="12" r="8.6" fill="url(#gSph)" stroke="#151515" stroke-width="1.1"/><path d="M4.5 13Q13 15.6 21.5 13A8.6 8.6 0 0 1 4.5 13Z" fill="#000" opacity="0.38"/><path d="M4.6 13Q13 15.4 21.4 13" fill="none" stroke="#222" stroke-width="0.9"/><path d="M11 3.6Q9 12 11 20.4" fill="none" stroke="#222" stroke-width="0.9"/></svg>
<svg style="left:735px;top:188px;overflow:visible;" width="30" height="28" viewBox="-2 -2 30 28"><rect x="1.4" y="0.6" width="23.6" height="22.8" fill="url(#pDots)"/><circle cx="13" cy="12" r="8.6" fill="url(#gSph)" stroke="#151515" stroke-width="1.1"/><path d="M4.5 13Q13 15.6 21.5 13A8.6 8.6 0 0 1 4.5 13Z" fill="#000" opacity="0.38"/><path d="M4.6 13Q13 15.4 21.4 13" fill="none" stroke="#222" stroke-width="0.9"/><path d="M11 3.6Q9 12 11 20.4" fill="none" stroke="#222" stroke-width="0.9"/><path d="M26 19.3V24.5H20.4Z" fill="#6e6e6e"/></svg>
<svg style="left:763px;top:188px;overflow:visible;" width="30" height="28" viewBox="-2 -2 30 28"><ellipse cx="12" cy="20" rx="9" ry="2.2" fill="#c8cad2"/><circle cx="12.8" cy="11.8" r="8.6" fill="url(#gBlue)" stroke="#050a30" stroke-width="0.8"/><ellipse cx="9.4" cy="7.2" rx="2.4" ry="1.5" transform="rotate(-30 9.4 7.2)" fill="#fff" opacity="0.95"/><path d="M15 18.8Q19.4 17.4 20.4 13.4Q19.6 18.4 15 18.8Z" fill="#4a8cff"/><path d="M26 19.3V24.5H20.4Z" fill="#6e6e6e"/></svg>
<svg style="left:791px;top:188px;overflow:visible;" width="30" height="28" viewBox="-2 -2 30 28"><ellipse cx="9" cy="14" rx="11" ry="8" fill="url(#gGlow)"/><path d="M11.2 5.2L23.7 1.2L20.9 12.8Z" fill="url(#gCone)" stroke="#5a3200" stroke-width="0.6" stroke-linejoin="round"/><ellipse cx="16" cy="9" rx="6.2" ry="1.7" transform="rotate(38 16 9)" fill="#fff3d6" stroke="#4a2a00" stroke-width="0.7"/><path d="M26 19.3V24.5H20.4Z" fill="#6e6e6e"/></svg>
<svg style="left:819px;top:188px;overflow:visible;" width="30" height="28" viewBox="-2 -2 30 28"><path d="M23.6 14.2L22.0 17.4L18.8 16.0L17.3 17.3L18.9 20.0L15.2 21.3L14.1 18.4L11.9 18.4L10.8 21.3L7.1 20.0L8.7 17.3L7.2 16.0L4.0 17.4L2.4 14.2L5.9 13.3L5.9 11.5L2.4 10.6L4.0 7.4L7.2 8.8L8.7 7.5L7.1 4.8L10.8 3.5L11.9 6.4L14.1 6.4L15.2 3.5L18.9 4.8L17.3 7.5L18.8 8.8L22.0 7.4L23.6 10.6L20.1 11.5L20.1 13.3Z" fill="#ffe87a" stroke="#3a2a00" stroke-width="0.9" stroke-linejoin="round"/><circle cx="21.9" cy="16.0" r="1" fill="#d86a00"/><circle cx="16.7" cy="20.4" r="1" fill="#d86a00"/><circle cx="9.3" cy="20.4" r="1" fill="#d86a00"/><circle cx="4.1" cy="16.0" r="1" fill="#d86a00"/><rect x="10.4" y="7.2" width="5.2" height="8.4" rx="1.8" fill="url(#gCyl)" stroke="#222" stroke-width="0.9"/><ellipse cx="13" cy="8.2" rx="2.2" ry="0.9" fill="#e8e8e8"/><path d="M26 19.3V24.5H20.4Z" fill="#6e6e6e"/></svg>
<svg style="left:847px;top:188px;overflow:visible;" width="30" height="28" viewBox="-2 -2 30 28"><path d="M3 2H11.2M3 12.8H11.2M4.6 3.4V11.4M12 14.4V22.2M22 14.4V22.2M13.6 20H20.4" stroke="#000" stroke-width="1.1" fill="none"/><path d="M4.6 2.6L6.6 6H2.6Z M4.6 12.2L6.6 8.8H2.6Z M12.8 20L16 18V22Z M21.2 20L18 18V22Z" fill="#000"/><rect x="10.6" y="0.8" width="2.6" height="2.6" fill="#fff" stroke="#000" stroke-width="0.9"/><rect x="10.8" y="11.6" width="2.6" height="2.6" fill="#fff" stroke="#000" stroke-width="0.9"/><rect x="20.8" y="11.6" width="2.6" height="2.6" fill="#fff" stroke="#000" stroke-width="0.9"/><path d="M26 19.3V24.5H20.4Z" fill="#6e6e6e"/></svg>
<svg style="left:875px;top:188px;overflow:visible;" width="30" height="28" viewBox="-2 -2 30 28"><circle cx="13.1" cy="11.8" r="11.2" fill="#b2dca2" stroke="#4a4a4a" stroke-width="1.3"/><path d="M13.1 0.8A11 11 0 0 1 24.1 11.8A11 11 0 0 1 19 21Q22 12 13.1 0.8Z" fill="#5f7a58" opacity="0.45"/><path d="M10.6 1.6V8.6" stroke="#5a6a58" stroke-width="0.9"/><path d="M4.6 19.2L20.6 6" stroke="#3a3a3a" stroke-width="0.9"/><path d="M3 13L6.2 11.6L7.6 9L10.8 10L12.6 13.2L11.4 15.6L18.4 18.6L15 19.8L10.4 18L9 21.6L6.6 20.4L7.4 16.4L4.4 16Z" fill="#333"/><path d="M26 19.3V24.5H20.4Z" fill="#6e6e6e"/></svg>
<svg style="left:903px;top:188px;overflow:visible;" width="30" height="28" viewBox="-2 -2 30 28"><circle cx="13" cy="11.6" r="10" fill="url(#gHelp)"/><text x="13" y="19.2" text-anchor="middle" font-family="Liberation Serif, serif" font-weight="700" font-size="20" fill="#fff">?</text><path d="M26 19.3V24.5H20.4Z" fill="#6e6e6e"/></svg>
<svg style="left:9px;top:7px;" width="16" height="16" viewBox="0 0 16 16"><rect width="16" height="16" fill="#000"/><path d="M0 0H4.6L7.2 5.2L9.4 7.6L11.2 9.4L16 8.6L9.6 15.6L0 8Z" fill="#fff"/><path d="M3.4 0.2Q3 4.6 1.2 6.2" fill="none" stroke="#000" stroke-width="1.1"/><path d="M4.6 0H16V8L11.4 9.6Q8.4 7.6 7 5Z" fill="#000"/><path d="M14.4 1.2L12.6 6.6" stroke="#fff" stroke-width="0.9" stroke-dasharray="1.3 0.7"/><path d="M3.2 8.4L6.8 11.4L7.8 10.2M4.4 7.2L6.6 8.2" stroke="#222" stroke-width="0.9" fill="none"/><path d="M11 9.4L13.6 7.6" stroke="#000" stroke-width="1"/></svg>
<svg style="left:950px;top:260px;" width="16" height="16" viewBox="0 0 16 16"><path d="M8 8.2L3.93 2.50A7 7 0 0 1 5.81 1.55Z" fill="#ff1d00"/><path d="M8 8.2L5.55 1.64A7 7 0 0 1 7.61 1.21Z" fill="#ff5800"/><path d="M8 8.2L7.33 1.23A7 7 0 0 1 9.43 1.35Z" fill="#ff9200"/><path d="M8 8.2L9.15 1.30A7 7 0 0 1 11.15 1.95Z" fill="#ffcd00"/><path d="M8 8.2L10.90 1.83A7 7 0 0 1 12.66 2.98Z" fill="#dfeb00"/><path d="M8 8.2L12.45 2.80A7 7 0 0 1 13.86 4.36Z" fill="#9feb00"/><path d="M8 8.2L13.70 4.13A7 7 0 0 1 14.65 6.01Z" fill="#5feb00"/><path d="M8 8.2L14.56 5.75A7 7 0 0 1 14.99 7.81Z" fill="#1feb00"/><path d="M8 8.2L14.97 7.53A7 7 0 0 1 14.85 9.63Z" fill="#00eb1f"/><path d="M8 8.2L14.90 9.35A7 7 0 0 1 14.25 11.35Z" fill="#00eb5f"/><path d="M8 8.2L14.37 11.10A7 7 0 0 1 13.22 12.86Z" fill="#00eb9f"/><path d="M8 8.2L13.40 12.65A7 7 0 0 1 11.84 14.06Z" fill="#00ebdf"/><path d="M8 8.2L12.07 13.90A7 7 0 0 1 10.19 14.85Z" fill="#00cdff"/><path d="M8 8.2L10.45 14.76A7 7 0 0 1 8.39 15.19Z" fill="#0092ff"/><path d="M8 8.2L8.67 15.17A7 7 0 0 1 6.57 15.05Z" fill="#0058ff"/><path d="M8 8.2L6.85 15.10A7 7 0 0 1 4.85 14.45Z" fill="#001dff"/><path d="M8 8.2L5.10 14.57A7 7 0 0 1 3.34 13.42Z" fill="#1f00ff"/><path d="M8 8.2L3.55 13.60A7 7 0 0 1 2.14 12.04Z" fill="#5f00ff"/><path d="M8 8.2L2.30 12.27A7 7 0 0 1 1.35 10.39Z" fill="#9f00ff"/><path d="M8 8.2L1.44 10.65A7 7 0 0 1 1.01 8.59Z" fill="#df00ff"/><path d="M8 8.2L1.03 8.87A7 7 0 0 1 1.15 6.77Z" fill="#ff00df"/><path d="M8 8.2L1.10 7.05A7 7 0 0 1 1.75 5.05Z" fill="#ff009f"/><path d="M8 8.2L1.63 5.30A7 7 0 0 1 2.78 3.54Z" fill="#ff005f"/><path d="M8 8.2L2.60 3.75A7 7 0 0 1 4.16 2.34Z" fill="#ff001f"/><circle cx="8" cy="8.2" r="6.7" fill="none" stroke="#1a1a1a" stroke-width="0.9"/><circle cx="8" cy="8.2" r="3.9" fill="#fff" stroke="#444" stroke-width="0.4"/></svg>
<svg style="left:1036px;top:260px;" width="17" height="16" viewBox="0 0 17 16"><rect x="1.6" y="1.4" width="14" height="10.8" fill="url(#gGrey)" stroke="#111" stroke-width="1.3"/><path d="M6.4 12.6H10.8L11.6 14H5.6Z" fill="#111"/><rect x="4.2" y="13.8" width="8.8" height="1.2" fill="#111"/></svg>
<svg style="left:1108px;top:261px" width="18" height="14" viewBox="0 0 18 14"><defs><linearGradient id="gDome" x1="0.2" y1="0" x2="0.6" y2="1"><stop offset="0" stop-color="#3a6ae8"/><stop offset="0.5" stop-color="#2a9ad0"/><stop offset="1" stop-color="#42d486"/></linearGradient></defs><path d="M1.4 9.6Q1.4 1.8 9 1.8Q16.6 1.8 16.6 9.6Q16.6 12.2 9 12.2Q1.4 12.2 1.4 9.6Z" fill="url(#gDome)" stroke="#0a2a4a" stroke-width="1"/></svg>
<svg style="left:1271.5px;top:261.5px;" width="15" height="15" viewBox="0 0 15 15"><path d="M14.0 6.4L14.0 8.6L12.3 8.7L11.8 10.1L12.9 11.3L11.3 12.9L10.1 11.8L8.7 12.3L8.6 14.0L6.4 14.0L6.3 12.3L4.9 11.8L3.7 12.9L2.1 11.3L3.2 10.1L2.7 8.7L1.0 8.6L1.0 6.4L2.7 6.3L3.2 4.9L2.1 3.7L3.7 2.1L4.9 3.2L6.3 2.7L6.4 1.0L8.6 1.0L8.7 2.7L10.1 3.2L11.3 2.1L12.9 3.7L11.8 4.9L12.3 6.3Z" fill="none" stroke="#c3c8d6" stroke-width="0.9" stroke-linejoin="round"/><circle cx="7.5" cy="7.5" r="2" fill="none" stroke="#c3c8d6" stroke-width="0.9"/></svg>
<svg style="left:1271.5px;top:624.5px;" width="15" height="15" viewBox="0 0 15 15"><path d="M14.0 6.4L14.0 8.6L12.3 8.7L11.8 10.1L12.9 11.3L11.3 12.9L10.1 11.8L8.7 12.3L8.6 14.0L6.4 14.0L6.3 12.3L4.9 11.8L3.7 12.9L2.1 11.3L3.2 10.1L2.7 8.7L1.0 8.6L1.0 6.4L2.7 6.3L3.2 4.9L2.1 3.7L3.7 2.1L4.9 3.2L6.3 2.7L6.4 1.0L8.6 1.0L8.7 2.7L10.1 3.2L11.3 2.1L12.9 3.7L11.8 4.9L12.3 6.3Z" fill="none" stroke="#c3c8d6" stroke-width="0.9" stroke-linejoin="round"/><circle cx="7.5" cy="7.5" r="2" fill="none" stroke="#c3c8d6" stroke-width="0.9"/></svg>
<svg style="left:1270.5px;top:169.5px;" width="15" height="15" viewBox="0 0 15 15"><path d="M14.0 6.4L14.0 8.6L12.3 8.7L11.8 10.1L12.9 11.3L11.3 12.9L10.1 11.8L8.7 12.3L8.6 14.0L6.4 14.0L6.3 12.3L4.9 11.8L3.7 12.9L2.1 11.3L3.2 10.1L2.7 8.7L1.0 8.6L1.0 6.4L2.7 6.3L3.2 4.9L2.1 3.7L3.7 2.1L4.9 3.2L6.3 2.7L6.4 1.0L8.6 1.0L8.7 2.7L10.1 3.2L11.3 2.1L12.9 3.7L11.8 4.9L12.3 6.3Z" fill="none" stroke="#8a8e98" stroke-width="0.9" stroke-linejoin="round"/><circle cx="7.5" cy="7.5" r="2" fill="none" stroke="#8a8e98" stroke-width="0.9"/></svg>
<svg style="left:955px;top:286px" width="23" height="20" viewBox="0 0 23 20"><defs><radialGradient id="gCamL" cx="0.4" cy="0.4" r="0.6"><stop offset="0" stop-color="#5a7a9a"/><stop offset="0.6" stop-color="#1a2a3a"/><stop offset="1" stop-color="#000"/></radialGradient><linearGradient id="gCamB" x1="0" y1="0" x2="0" y2="1"><stop offset="0" stop-color="#5a5a5a"/><stop offset="1" stop-color="#1c1c1c"/></linearGradient></defs>
<path d="M1.4 7.4Q1.4 5.4 3.4 5.2L6 4.8L7 3.2Q7.4 2.6 8.2 2.6H14.4Q15.2 2.6 15.6 3.4L16.4 5H19.4Q21.6 5 21.6 7.2V16Q21.6 17.8 19.6 17.8H3.4Q1.4 17.8 1.4 16Z" fill="url(#gCamB)" stroke="#111" stroke-width="0.6"/>
<circle cx="13" cy="11.6" r="5.9" fill="#d8d8d8" stroke="#111" stroke-width="0.8"/><circle cx="13" cy="11.6" r="4.5" fill="url(#gCamL)"/><path d="M10.6 13.6Q13 15.6 15.6 13.4" stroke="#3a9a5a" stroke-width="1" fill="none"/><circle cx="11.4" cy="9.8" r="0.9" fill="#9ab8e0"/>
<rect x="3" y="4" width="3" height="1.4" fill="#222"/></svg>
<svg style="left:986px;top:285px;" width="25" height="22" viewBox="0 0 25 22"><rect x="0.5" y="0.5" width="23.4" height="21" fill="#bdbdbd" stroke="#333" stroke-width="1"/><rect x="2.9" y="3.1" width="18.6" height="15.8" fill="#fff" stroke="#5ec4f0" stroke-width="1.1"/><rect x="4.7" y="5.5" width="15.2" height="11" fill="#fff" stroke="#e81818" stroke-width="1.1"/></svg>
<svg style="left:959px;top:621px;" width="20" height="20" viewBox="0 0 20 20"><path d="M1.8 2.2L16.7 5.0L16.7 12.5L8.8 17.6L2.5 9.9Z" fill="#1a2f9c" stroke="#15151f" stroke-width="1.1" stroke-linejoin="round"/><path d="M2.1 2.7L16.4 5.3L16.4 10.8L9.1 14.2L2.8 9.9Z" fill="#ececec"/><path d="M2.1 2.7L16.4 5.3L16.4 9.3L9.2 12.5L2.7 8.7Z" fill="#e61a00"/><path d="M2.1 2.7L16.4 5.3L16.4 7.7L9.2 10.8L2.5 7.3Z" fill="#ff5a12"/><path d="M2.4 3.0L15.2 5.4L8.5 6.8Z" fill="#ff7a2a" opacity="0.8"/></svg>
<svg style="left:1005.4px;top:625.4px;" width="15.4" height="10.8" viewBox="3 4.6 21.2 15.4"><path d="M3.8 19.2V6.6Q3.8 5.4 5 5.4H9.2L10.8 7.4H17.6Q18.8 7.4 18.8 8.6V10.4H7.6Z" fill="#ffec94" stroke="#3a3000" stroke-width="1.2"/><path d="M3.9 19.3L7.6 10.2H23.2L19.6 19.3Z" fill="url(#gFold)" stroke="#3a3000" stroke-width="1.2" stroke-linejoin="round"/></svg>
<svg style="left:1050px;top:623px;" width="15" height="15" viewBox="0 0 15 15"><path d="M1.6 11.4L8.6 3.6L12 6.6L5 14Z" fill="#f4f4f4" stroke="#555" stroke-width="0.9"/><path d="M6.8 5.6L10.2 8.6L11.8 6.8L8.6 3.8Z" fill="#f05a14"/><path d="M9.6 2.6L11.6 0.8L14 3L12.4 5.2Z" fill="#b9b9b9" stroke="#555" stroke-width="0.7"/><path d="M2.4 11.6L4.8 13.6" stroke="#999" stroke-width="0.8"/></svg>
<svg style="left:1093.4px;top:622.4px;" width="15.4" height="16.6" viewBox="0 0 15.4 16.6"><path d="M7.6 0.8Q8.8 0.8 8.8 2.2Q12.4 3.2 12.4 7.6V10.6Q12.4 12 14.6 13.2V13.8H0.6V13.2Q2.8 12 2.8 10.6V7.6Q2.8 3.2 6.4 2.2Q6.4 0.8 7.6 0.8Z" fill="#1e7cf0" stroke="#0a2a70" stroke-width="0.9"/><path d="M6 14.2Q7.6 16.6 9.2 14.2Z" fill="#1e7cf0" stroke="#0a2a70" stroke-width="0.8"/></svg>
<svg style="left:1225.2px;top:622.4px;" width="15.4" height="16.6" viewBox="0 0 15.4 16.6"><path d="M7.6 0.8Q8.8 0.8 8.8 2.2Q12.4 3.2 12.4 7.6V10.6Q12.4 12 14.6 13.2V13.8H0.6V13.2Q2.8 12 2.8 10.6V7.6Q2.8 3.2 6.4 2.2Q6.4 0.8 7.6 0.8Z" fill="#ffd200" stroke="#7a5a00" stroke-width="0.9"/><path d="M6 14.2Q7.6 16.6 9.2 14.2Z" fill="#ffd200" stroke="#7a5a00" stroke-width="0.8"/></svg>
<svg style="left:1138px;top:624px;" width="14" height="14" viewBox="0 0 14 14"><rect x="0.5" y="0.5" width="13" height="13" fill="#e9e9f4" stroke="#555" stroke-width="0.9"/><rect x="1" y="1" width="12" height="2" fill="#2a2a8a"/><ellipse cx="7" cy="8.3" rx="5.6" ry="4.8" fill="url(#gHelp)"/><text x="7" y="11.8" text-anchor="middle" font-family="Liberation Serif, serif" font-weight="700" font-size="9" fill="#fff">?</text></svg>
<svg style="left:1181px;top:622px;" width="17" height="17" viewBox="0 0 17 17"><ellipse cx="7.6" cy="15" rx="6.4" ry="1.4" fill="#b0b4c0"/><circle cx="7.4" cy="9.6" r="6.4" fill="url(#gBlue)" stroke="#050a30" stroke-width="0.7"/><ellipse cx="5" cy="6.6" rx="1.8" ry="1.1" transform="rotate(-30 5 6.6)" fill="#fff" opacity="0.95"/><path d="M8.4 5.4Q9.6 2.4 13 2.6" fill="none" stroke="#eee" stroke-width="2.2"/><path d="M12 0.4L16 2.8L12.4 5.4Z" fill="#222"/></svg>
<svg style="left:956.6px;top:651.6px;" width="11.4" height="14.2" viewBox="0 0 11.4 14.2"><path d="M0.7 0.7H7.2L10.2 3.7V13H0.7Z" fill="url(#gPage)" stroke="#111" stroke-width="1.2"/><path d="M7 0.9V3.9H10" fill="#fff" stroke="#111" stroke-width="0.8"/></svg>
<svg style="left:978px;top:651.6px;" width="13.4" height="14.2" viewBox="0 0 13.4 14.2"><path d="M0.7 0.7H5.2L7.6 3.1V8.6H0.7Z" fill="url(#gPage)" stroke="#111" stroke-width="1.2"/><path d="M4.6 5.4H9.4L12.2 8.2V13.4H4.6Z" fill="url(#gPage)" stroke="#111" stroke-width="1.2"/></svg>
<svg style="left:1000.5px;top:651.8px;" width="15" height="14.6" viewBox="0 0 15 14.6"><path d="M1.4 1.4L13.6 13.2M13.6 1.4L1.4 13.2" stroke="#d41414" stroke-width="2.4" fill="none"/></svg>
<svg style="left:1024px;top:653.4px;" width="14.4" height="9.6" viewBox="0 0 14.4 9.6"><path d="M7.2 1L13.4 8.6H1Z" fill="#8fa8ff" stroke="#1a2a7a" stroke-width="0.9" stroke-linejoin="round"/></svg>
<svg style="left:1045.6px;top:653.4px;" width="14.8" height="10" viewBox="0 0 14.8 10"><path d="M7.4 9L13.8 1H1Z" fill="#8fa8ff" stroke="#1a2a7a" stroke-width="0.9" stroke-linejoin="round"/></svg>
<svg style="left:1070.4px;top:651.8px;" width="9.6" height="14" viewBox="0 0 9.6 14"><path d="M8.8 0.6V13.6L0.8 7.2Z" fill="#a6a6a6"/></svg>
<svg style="left:1091.8px;top:652.2px;" width="15.4" height="14.2" viewBox="0 0 15.4 14.2"><path d="M0.8 0.9H12.4L8 6.6V13L5.2 13V6.6Z" fill="#3a6ae0" stroke="#1a2a7a" stroke-width="0.8"/><ellipse cx="6.6" cy="1.4" rx="5.6" ry="1" fill="#8fb0ff"/><path d="M14.8 10.8V14H11.6Z" fill="#111"/></svg>
<svg style="left:1116px;top:651.6px;" width="14.4" height="14.6" viewBox="0 0 14.4 14.6"><path d="M0.6 0.6H7.2L10.4 3.8V13.4H0.6Z" fill="#c4c4c4" stroke="#a8a8a8" stroke-width="1"/><path d="M13.8 10.8V14H10.6Z" fill="#888"/></svg>
<svg style="left:1136px;top:651.6px;" width="16" height="15" viewBox="0 0 16 15"><path d="M1.2 12.6L8 4.6L10.2 6.6L3.6 14.6Q2.2 15 1.2 14Q0.6 13.2 1.2 12.6Z" fill="#1c2f9e" stroke="#0a1040" stroke-width="0.8"/><path d="M4.4 3.4Q7.6 -0.2 12 1.4Q14.6 2.8 15 6L13 6.4Q12.6 4.8 11.4 4.2L9.8 6.2L6.8 3.6Q5.6 3.6 4.4 3.4Z" fill="#dcdcdc" stroke="#222" stroke-width="0.9" stroke-linejoin="round"/><path d="M15.6 11.4V14.6H12.4Z" fill="#111"/></svg>
<svg style="left:1159.6px;top:651.8px;" width="14.6" height="14.6" viewBox="0 0 14.6 14.6"><circle cx="7.3" cy="7.3" r="7" fill="url(#gHelp)"/><text x="7.3" y="12.6" text-anchor="middle" font-family="Liberation Serif, serif" font-weight="700" font-size="14" fill="#fff">?</text></svg>
<svg style="left:1143px;top:720.0px;" width="11" height="13.4" viewBox="0 0 11 13.4"><path d="M5.5 0.8Q9.8 0.8 9.8 4.8Q9.8 6.6 8.4 8Q7.6 9 7.6 10.4V11.2Q7.6 12.4 5.5 12.4Q3.4 12.4 3.4 11.2V10.4Q3.4 9 2.6 8Q1.2 6.6 1.2 4.8Q1.2 0.8 5.5 0.8Z" fill="#fff09a" stroke="#b06a00" stroke-width="1"/><path d="M3.6 10.6H7.4" stroke="#b06a00" stroke-width="0.7"/><path d="M4.6 3.2Q3.4 4 3.6 5.6" stroke="#fff" stroke-width="1" fill="none"/></svg>
<svg style="left:1159.4px;top:720.0px;" width="14" height="13.4" viewBox="0 0 14 13.4"><path d="M6.6 5.4V3.6Q6.6 0.9 9.4 0.9Q12.2 0.9 12.2 3.6V5.6" fill="none" stroke="#111" stroke-width="1.2"/><rect x="1" y="5" width="8.4" height="7.6" fill="#ffe650" stroke="#111" stroke-width="1.1"/><path d="M2 6H8.4" stroke="#fff8c0" stroke-width="0.9"/></svg>
<svg style="left:1143px;top:739.0px;" width="11" height="13.4" viewBox="0 0 11 13.4"><path d="M5.5 0.8Q9.8 0.8 9.8 4.8Q9.8 6.6 8.4 8Q7.6 9 7.6 10.4V11.2Q7.6 12.4 5.5 12.4Q3.4 12.4 3.4 11.2V10.4Q3.4 9 2.6 8Q1.2 6.6 1.2 4.8Q1.2 0.8 5.5 0.8Z" fill="#fff09a" stroke="#b06a00" stroke-width="1"/><path d="M3.6 10.6H7.4" stroke="#b06a00" stroke-width="0.7"/><path d="M4.6 3.2Q3.4 4 3.6 5.6" stroke="#fff" stroke-width="1" fill="none"/></svg>
<svg style="left:1159.4px;top:739.0px;" width="14" height="13.4" viewBox="0 0 14 13.4"><path d="M6.6 5.4V3.6Q6.6 0.9 9.4 0.9Q12.2 0.9 12.2 3.6V5.6" fill="none" stroke="#111" stroke-width="1.2"/><rect x="1" y="5" width="8.4" height="7.6" fill="#ffe650" stroke="#111" stroke-width="1.1"/><path d="M2 6H8.4" stroke="#fff8c0" stroke-width="0.9"/></svg>
<svg style="left:1143px;top:758.0px;" width="11" height="13.4" viewBox="0 0 11 13.4"><path d="M5.5 0.8Q9.8 0.8 9.8 4.8Q9.8 6.6 8.4 8Q7.6 9 7.6 10.4V11.2Q7.6 12.4 5.5 12.4Q3.4 12.4 3.4 11.2V10.4Q3.4 9 2.6 8Q1.2 6.6 1.2 4.8Q1.2 0.8 5.5 0.8Z" fill="#fff09a" stroke="#b06a00" stroke-width="1"/><path d="M3.6 10.6H7.4" stroke="#b06a00" stroke-width="0.7"/><path d="M4.6 3.2Q3.4 4 3.6 5.6" stroke="#fff" stroke-width="1" fill="none"/></svg>
<svg style="left:1159.4px;top:758.0px;" width="14" height="13.4" viewBox="0 0 14 13.4"><path d="M6.6 5.4V3.6Q6.6 0.9 9.4 0.9Q12.2 0.9 12.2 3.6V5.6" fill="none" stroke="#111" stroke-width="1.2"/><rect x="1" y="5" width="8.4" height="7.6" fill="#ffe650" stroke="#111" stroke-width="1.1"/><path d="M2 6H8.4" stroke="#fff8c0" stroke-width="0.9"/></svg>
<svg style="left:1143px;top:777.0px;" width="11" height="13.4" viewBox="0 0 11 13.4"><path d="M5.5 0.8Q9.8 0.8 9.8 4.8Q9.8 6.6 8.4 8Q7.6 9 7.6 10.4V11.2Q7.6 12.4 5.5 12.4Q3.4 12.4 3.4 11.2V10.4Q3.4 9 2.6 8Q1.2 6.6 1.2 4.8Q1.2 0.8 5.5 0.8Z" fill="#fff09a" stroke="#b06a00" stroke-width="1"/><path d="M3.6 10.6H7.4" stroke="#b06a00" stroke-width="0.7"/><path d="M4.6 3.2Q3.4 4 3.6 5.6" stroke="#fff" stroke-width="1" fill="none"/></svg>
<svg style="left:1159.4px;top:777.0px;" width="14" height="13.4" viewBox="0 0 14 13.4"><path d="M6.6 5.4V3.6Q6.6 0.9 9.4 0.9Q12.2 0.9 12.2 3.6V5.6" fill="none" stroke="#111" stroke-width="1.2"/><rect x="1" y="5" width="8.4" height="7.6" fill="#ffe650" stroke="#111" stroke-width="1.1"/><path d="M2 6H8.4" stroke="#fff8c0" stroke-width="0.9"/></svg>
<svg style="left:1143px;top:796.0px;" width="11" height="13.4" viewBox="0 0 11 13.4"><path d="M5.5 0.8Q9.8 0.8 9.8 4.8Q9.8 6.6 8.4 8Q7.6 9 7.6 10.4V11.2Q7.6 12.4 5.5 12.4Q3.4 12.4 3.4 11.2V10.4Q3.4 9 2.6 8Q1.2 6.6 1.2 4.8Q1.2 0.8 5.5 0.8Z" fill="#fff09a" stroke="#b06a00" stroke-width="1"/><path d="M3.6 10.6H7.4" stroke="#b06a00" stroke-width="0.7"/><path d="M4.6 3.2Q3.4 4 3.6 5.6" stroke="#fff" stroke-width="1" fill="none"/></svg>
<svg style="left:1159.4px;top:796.0px;" width="14" height="13.4" viewBox="0 0 14 13.4"><path d="M6.6 5.4V3.6Q6.6 0.9 9.4 0.9Q12.2 0.9 12.2 3.6V5.6" fill="none" stroke="#111" stroke-width="1.2"/><rect x="1" y="5" width="8.4" height="7.6" fill="#ffe650" stroke="#111" stroke-width="1.1"/><path d="M2 6H8.4" stroke="#fff8c0" stroke-width="0.9"/></svg>
<svg style="left:66px;top:894.5px;" width="48" height="22" viewBox="0 0 48 22"><path d="M2.6 0.8L17.8 18.6H40.8Q44.9 18.6 44.9 14.6V0.8" fill="none" stroke="#c9d0de" stroke-width="1"/></svg>
<svg style="left:206.6px;top:899.8px;" width="10.4" height="10" viewBox="0 0 10.4 10"><path d="M3.6 0.6H6.4V3.6H9.4V6.4H6.4V9.4H3.6V6.4H0.6V3.6H3.6Z" fill="none" stroke="#808080" stroke-width="0.8"/></svg>
<svg style="left:3px;top:248px;" width="934" height="644" viewBox="0 0 934 644"><path d="M189.9 341.7L230.9 236.1L348.9 231.9L378.2 284.0L389.4 358.1L467.6 366.5L528.6 330.0L573.3 350.4L606.1 403.3L671.2 244.3L773.1 280.8" fill="none" stroke="#6a6a6a" stroke-width="0.9"/><path d="M189.9 341.7L193.6 332.4L197.4 323.5L201.3 315.1L205.2 307.0L209.3 299.4L213.4 292.2L217.5 285.4L221.8 279.1L226.1 273.1L230.4 267.6L234.9 262.5L239.4 257.8L244.0 253.6L248.7 249.7L253.5 246.3L258.3 243.3L263.2 240.7L268.1 238.5L273.2 236.8L278.3 235.5L283.5 234.5L288.7 234.1L294.0 233.9L299.1 233.8L304.0 233.9L308.7 234.1L313.2 234.4L317.6 234.8L321.8 235.3L325.8 236.0L329.6 236.7L333.2 237.6L336.7 238.6L340.0 239.7L343.1 240.9L346.0 242.2L348.8 243.7L351.3 245.2L353.7 246.9L355.9 248.7L357.9 250.6L359.8 252.6L361.5 254.7L362.9 256.9L364.3 259.3L365.6 261.7L366.8 264.1L368.0 266.6L369.2 269.1L370.3 271.7L371.4 274.3L372.5 276.9L373.5 279.6L374.5 282.4L375.4 285.2L376.3 288.0L377.2 290.9L378.1 293.8L378.9 296.8L379.6 299.8L380.4 302.9L381.0 306.0L381.7 309.1L382.3 312.3L382.9 315.6L383.5 318.8L384.0 322.2L384.6 325.4L385.3 328.5L386.2 331.4L387.3 334.3L388.4 336.9L389.7 339.5L391.1 341.9L392.7 344.2L394.4 346.4L396.3 348.4L398.2 350.3L400.3 352.1L402.6 353.7L405.0 355.2L407.5 356.5L410.1 357.8L412.9 358.9L415.8 359.8L418.9 360.7L422.1 361.3L425.4 361.9L428.9 362.3L432.4 362.7L435.9 362.9L439.3 363.0L442.7 363.1L446.0 363.0L449.4 362.9L452.6 362.7L455.9 362.4L459.1 362.0L462.3 361.5L465.5 360.9L468.6 360.2L471.6 359.4L474.7 358.6L477.7 357.6L480.7 356.6L483.6 355.5L486.5 354.2L489.4 352.9L492.2 351.5L495.0 350.0L497.8 348.4L500.5 346.8L503.2 345.4L505.9 344.0L508.5 342.7L511.1 341.6L513.7 340.6L516.2 339.7L518.7 338.9L521.2 338.2L523.6 337.6L526.0 337.2L528.4 336.9L530.7 336.7L533.0 336.6L535.3 336.6L537.5 336.7L539.8 336.9L541.9 337.3L544.1 337.8L546.2 338.4L548.2 339.1L550.3 339.9L552.3 340.8L554.3 341.8L556.2 342.9L558.2 344.0L560.1 345.2L562.0 346.5L563.8 347.8L565.7 349.2L567.5 350.6L569.3 352.1L571.0 353.7L572.8 355.4L574.5 357.1L576.2 358.9L577.9 360.7L579.5 362.7L581.1 364.6L582.7 366.7L584.3 368.8L585.8 371.0L587.4 373.2L588.9 375.5L590.4 377.9L591.9 379.8L593.5 381.4L595.2 382.5L596.9 383.2L598.7 383.5L600.6 383.3L602.5 382.7L604.5 381.7L606.6 380.2L608.7 378.3L610.9 376.0L613.1 373.2L615.5 370.1L617.8 366.5L620.3 362.4L622.8 358.0L625.4 353.1L628.0 347.8L630.8 342.0L633.5 335.8L636.4 329.2L639.3 322.2L642.4 315.4L645.9 309.1L649.5 303.2L653.5 297.8L657.8 292.8L662.3 288.4L667.1 284.4L672.2 280.9L677.6 277.8L683.3 275.2L689.2 273.1L695.4 271.4L701.9 270.3L708.7 269.6L715.8 269.3L723.1 269.5L730.8 270.2L738.7 271.4L746.9 273.1L755.3 275.2L764.1 277.7L773.1 280.8" fill="none" stroke="#6a6a6a" stroke-width="0.9"/><path d="M189.9 341.7L194.3 331.0L198.8 321.0L203.4 311.8L208.1 303.2L212.9 295.3L217.7 288.1L222.7 281.5L227.7 275.6L232.7 270.2L237.8 265.4L242.9 261.1L248.1 257.4L253.2 254.2L258.3 251.4L263.5 249.2L268.6 247.4L273.6 246.0L278.6 245.0L283.6 244.4L288.5 244.2L293.3 244.3L298.0 244.7L302.7 245.4L307.2 246.4L311.6 247.7L315.8 249.2L320.0 250.9L323.9 252.8L327.8 254.9L331.4 257.1L334.9 259.5L338.3 262.1L341.5 264.7L344.5 267.5L347.5 270.4L350.3 273.3L353.0 276.4L355.6 279.5L358.2 282.7L360.6 285.9L362.9 289.2L365.2 292.5L367.4 295.8L369.5 299.1L371.6 302.4L373.7 305.7L375.7 309.0L377.7 312.3L379.6 315.5L381.6 318.6L383.5 321.7L385.4 324.7L387.4 327.6L389.3 330.4L391.3 333.1L393.3 335.7L395.4 338.1L397.5 340.4L399.6 342.6L401.8 344.6L404.0 346.5L406.3 348.3L408.6 349.9L410.9 351.4L413.2 352.8L415.6 354.0L418.0 355.2L420.5 356.2L422.9 357.1L425.4 357.9L427.9 358.6L430.4 359.2L432.9 359.8L435.4 360.2L437.9 360.5L440.4 360.7L443.0 360.9L445.5 360.9L448.0 360.9L450.5 360.8L453.1 360.7L455.6 360.4L458.1 360.1L460.5 359.8L463.0 359.4L465.4 358.9L467.8 358.3L470.2 357.8L472.6 357.1L475.0 356.5L477.3 355.8L479.6 355.0L481.9 354.3L484.2 353.5L486.5 352.7L488.7 351.8L490.9 351.0L493.1 350.2L495.3 349.3L497.4 348.5L499.5 347.7L501.6 346.9L503.7 346.1L505.8 345.3L507.8 344.5L509.9 343.8L511.9 343.1L513.9 342.5L515.8 341.8L517.8 341.3L519.7 340.8L521.6 340.3L523.5 339.9L525.4 339.6L527.2 339.3L529.0 339.1L530.8 339.0L532.6 338.9L534.4 338.9L536.1 339.0L537.9 339.1L539.6 339.3L541.3 339.6L542.9 339.9L544.6 340.3L546.2 340.7L547.9 341.2L549.5 341.7L551.0 342.3L552.6 343.0L554.2 343.7L555.7 344.5L557.2 345.3L558.7 346.1L560.2 347.1L561.7 348.0L563.1 349.0L564.6 350.1L566.0 351.2L567.4 352.3L568.8 353.5L570.1 354.7L571.5 356.0L572.9 357.3L574.2 358.6L575.5 360.0L576.8 361.3L578.2 362.6L579.5 363.9L580.8 365.2L582.2 366.3L583.5 367.4L584.9 368.5L586.3 369.4L587.7 370.2L589.1 370.9L590.6 371.4L592.1 371.8L593.6 372.0L595.2 372.0L596.8 371.8L598.5 371.4L600.2 370.8L601.9 370.0L603.7 368.9L605.6 367.5L607.5 365.8L609.5 363.9L611.6 361.6L613.7 359.0L615.9 356.1L618.2 352.8L620.6 349.2L623.1 345.3L625.7 341.2L628.4 336.8L631.3 332.3L634.3 327.7L637.6 323.0L641.0 318.2L644.6 313.5L648.4 308.8L652.5 304.2L656.9 299.7L661.5 295.4L666.4 291.3L671.6 287.5L677.1 284.0L682.9 280.8L689.1 278.0L695.6 275.7L702.5 273.8L709.8 272.4L717.5 271.6L725.7 271.4L734.2 271.8L743.2 272.9L752.7 274.8L762.7 277.4L773.1 280.8" fill="none" stroke="#000" stroke-width="1.1"/><path d="M189.9 341.7L195.8 327.7L201.9 315.0L208.1 303.8L214.5 293.7L221.0 284.9L227.6 277.1L234.2 270.3L240.9 264.4L247.5 259.4L254.0 255.2L260.5 251.7L266.9 248.8L273.1 246.6L279.2 244.8L285.2 243.6L291.0 242.8L296.5 242.4L301.9 242.3L307.1 242.5L312.1 243.1L316.8 243.8L321.3 244.7L325.6 245.8L329.6 247.1L333.4 248.5L337.0 250.0L340.3 251.6L343.5 253.3L346.4 255.1L349.2 256.9L351.8 258.8L354.1 260.8L356.4 262.9L358.5 264.9L360.4 267.1L362.2 269.3L363.9 271.5L365.5 273.7L367.0 276.0L368.4 278.3L369.7 280.7L370.9 283.0L372.1 285.4L373.2 287.8L374.3 290.2L375.3 292.6L376.3 295.0L377.2 297.4L378.1 299.8L379.0 302.1L379.9 304.5L380.8 306.9L381.7 309.2L382.6 311.5L383.5 313.7L384.4 316.0L385.3 318.2L386.3 320.4L387.2 322.5L388.2 324.6L389.3 326.6L390.4 328.6L391.5 330.6L392.7 332.4L393.9 334.3L395.1 336.1L396.5 337.8L397.8 339.4L399.2 341.0L400.7 342.6L402.2 344.0L403.8 345.4L405.4 346.8L407.1 348.0L408.9 349.2L410.6 350.4L412.5 351.4L414.4 352.4L416.3 353.3L418.3 354.2L420.4 355.0L422.5 355.7L424.6 356.3L426.8 356.9L429.0 357.4L431.2 357.8L433.5 358.2L435.8 358.5L438.1 358.7L440.4 358.9L442.8 359.0L445.2 359.0L447.5 359.0L449.9 358.9L452.3 358.8L454.7 358.6L457.1 358.4L459.5 358.1L461.9 357.7L464.2 357.4L466.6 356.9L469.0 356.5L471.3 356.0L473.7 355.4L476.0 354.9L478.3 354.3L480.6 353.7L482.9 353.0L485.1 352.4L487.3 351.7L489.6 351.0L491.8 350.3L493.9 349.6L496.1 348.9L498.2 348.3L500.3 347.6L502.4 346.9L504.5 346.3L506.6 345.7L508.6 345.1L510.6 344.5L512.6 344.0L514.6 343.5L516.5 343.1L518.5 342.7L520.4 342.3L522.3 342.0L524.2 341.7L526.0 341.5L527.9 341.3L529.7 341.2L531.5 341.2L533.3 341.2L535.1 341.2L536.9 341.4L538.6 341.6L540.3 341.8L542.1 342.2L543.8 342.5L545.5 343.0L547.1 343.5L548.8 344.1L550.5 344.8L552.1 345.5L553.8 346.3L555.4 347.1L557.0 348.0L558.6 349.0L560.2 350.0L561.8 351.0L563.4 352.1L565.0 353.3L566.7 354.4L568.3 355.6L569.9 356.7L571.5 357.9L573.2 359.1L574.8 360.2L576.5 361.2L578.2 362.2L579.9 363.2L581.7 364.0L583.5 364.7L585.3 365.3L587.2 365.7L589.1 366.0L591.1 366.1L593.1 365.9L595.2 365.5L597.3 364.9L599.6 364.0L601.9 362.7L604.2 361.1L606.7 359.2L609.3 356.9L612.0 354.2L614.8 351.1L617.7 347.6L620.8 343.8L624.1 339.7L627.6 335.3L631.3 330.5L635.2 325.6L639.4 320.5L643.9 315.2L648.8 309.9L654.0 304.6L659.6 299.4L665.7 294.4L672.2 289.6L679.2 285.2L686.8 281.2L695.0 277.8L703.8 275.1L713.3 273.2L723.6 272.3L734.6 272.4L746.5 273.8L759.3 276.5L773.1 280.8" fill="none" stroke="#000" stroke-width="1.1"/><path d="M36.5 579V609.5H66" fill="none" stroke="#4a4e55" stroke-width="1"/></svg>
<span class="t" style="left:29.4px;top:9.0px;">Rhino 7 Educational - [Top]</span>
<span class="t" style="left:8.4px;top:34.0px;letter-spacing:-0.29px;">File</span>
<span class="t" style="left:39.9px;top:34.0px;letter-spacing:-0.12px;">Edit</span>
<span class="t" style="left:73.7px;top:34.0px;letter-spacing:-0.05px;">View</span>
<span class="t" style="left:112.6px;top:34.0px;letter-spacing:0.04px;">Curve</span>
<span class="t" style="left:157.6px;top:34.0px;letter-spacing:-0.22px;">Surface</span>
<span class="t" style="left:211.0px;top:34.0px;letter-spacing:-0.36px;">SubD</span>
<span class="t" style="left:252.6px;top:34.0px;">Solid</span>
<span class="t" style="left:292.9px;top:34.0px;letter-spacing:-0.06px;">Mesh</span>
<span class="t" style="left:335.5px;top:34.0px;letter-spacing:0.12px;">Dimension</span>
<span class="t" style="left:407.0px;top:34.0px;letter-spacing:-0.17px;">Transform</span>
<span class="t" style="left:474.1px;top:34.0px;letter-spacing:-0.16px;">Tools</span>
<span class="t" style="left:514.4px;top:34.0px;letter-spacing:-0.07px;">Analyze</span>
<span class="t" style="left:569.7px;top:34.0px;letter-spacing:-0.36px;">Render</span>
<span class="t" style="left:621.3px;top:34.0px;letter-spacing:-0.43px;">Panels</span>
<span class="t" style="left:668.8px;top:34.0px;letter-spacing:0.10px;">Help</span>
<span class="t" style="left:8.4px;top:54.0px;letter-spacing:0.30px;">Next</span>
<span class="t" style="left:36.9px;top:54.0px;letter-spacing:-0.03px;">point.</span>
<span class="t" style="left:70.6px;top:54.0px;letter-spacing:-0.54px;">Press</span>
<span class="t" style="left:101.2px;top:54.0px;letter-spacing:-0.36px;">Enter</span>
<span class="t" style="left:131.2px;top:54.0px;letter-spacing:-0.12px;">when</span>
<span class="t" style="left:162.4px;top:54.0px;letter-spacing:0.17px;">done</span>
<span class="t" style="left:193.2px;top:54.0px;letter-spacing:0.90px;">(</span>
<span class="t" style="left:199.9px;top:54.0px;letter-spacing:-0.17px;">Degree=4</span>
<span class="t" style="left:256.4px;top:54.0px;">SubDFriendly=No</span>
<span class="t" style="left:356.9px;top:54.0px;letter-spacing:-0.09px;">PersistentClose=No</span>
<span class="t" style="left:466.9px;top:54.0px;letter-spacing:-0.20px;">Close</span>
<span class="t" style="left:501.4px;top:54.0px;letter-spacing:0.10px;">Sharp=No</span>
<span class="t" style="left:561.9px;top:54.0px;letter-spacing:-0.25px;">Undo</span>
<span class="t" style="left:592.4px;top:54.0px;letter-spacing:1.20px;">)</span>
<span class="t" style="left:8.4px;top:69.0px;letter-spacing:0.30px;">Next</span>
<span class="t" style="left:36.9px;top:69.0px;letter-spacing:-0.03px;">point.</span>
<span class="t" style="left:70.6px;top:69.0px;letter-spacing:-0.54px;">Press</span>
<span class="t" style="left:101.2px;top:69.0px;letter-spacing:-0.36px;">Enter</span>
<span class="t" style="left:131.2px;top:69.0px;letter-spacing:-0.12px;">when</span>
<span class="t" style="left:162.4px;top:69.0px;letter-spacing:0.17px;">done</span>
<span class="t" style="left:193.2px;top:69.0px;letter-spacing:0.90px;">(</span>
<span class="t" style="left:199.9px;top:69.0px;letter-spacing:-0.17px;">Degree=4</span>
<span class="t" style="left:256.4px;top:69.0px;">SubDFriendly=No</span>
<span class="t" style="left:356.9px;top:69.0px;letter-spacing:-0.09px;">PersistentClose=No</span>
<span class="t" style="left:466.9px;top:69.0px;letter-spacing:-0.20px;">Close</span>
<span class="t" style="left:501.4px;top:69.0px;letter-spacing:0.10px;">Sharp=No</span>
<span class="t" style="left:561.9px;top:69.0px;letter-spacing:-0.25px;">Undo</span>
<span class="t" style="left:592.4px;top:69.0px;letter-spacing:1.20px;">)</span>
<span class="t" style="left:8.4px;top:84.0px;letter-spacing:0.30px;">Next</span>
<span class="t" style="left:36.9px;top:84.0px;letter-spacing:-0.03px;">point.</span>
<span class="t" style="left:70.6px;top:84.0px;letter-spacing:-0.54px;">Press</span>
<span class="t" style="left:101.2px;top:84.0px;letter-spacing:-0.36px;">Enter</span>
<span class="t" style="left:131.2px;top:84.0px;letter-spacing:-0.12px;">when</span>
<span class="t" style="left:162.4px;top:84.0px;letter-spacing:0.17px;">done</span>
<span class="t" style="left:193.2px;top:84.0px;letter-spacing:0.90px;">(</span>
<span class="t" style="left:199.9px;top:84.0px;letter-spacing:-0.17px;">Degree=4</span>
<span class="t" style="left:256.4px;top:84.0px;">SubDFriendly=No</span>
<span class="t" style="left:356.9px;top:84.0px;letter-spacing:-0.09px;">PersistentClose=No</span>
<span class="t" style="left:466.9px;top:84.0px;letter-spacing:-0.20px;">Close</span>
<span class="t" style="left:501.4px;top:84.0px;letter-spacing:0.10px;">Sharp=No</span>
<span class="t" style="left:561.9px;top:84.0px;letter-spacing:-0.25px;">Undo</span>
<span class="t" style="left:592.4px;top:84.0px;letter-spacing:1.20px;">)</span>
<span class="t" style="left:8.4px;top:99.0px;letter-spacing:0.30px;">Next</span>
<span class="t" style="left:36.9px;top:99.0px;letter-spacing:-0.03px;">point.</span>
<span class="t" style="left:70.6px;top:99.0px;letter-spacing:-0.54px;">Press</span>
<span class="t" style="left:101.2px;top:99.0px;letter-spacing:-0.36px;">Enter</span>
<span class="t" style="left:131.2px;top:99.0px;letter-spacing:-0.12px;">when</span>
<span class="t" style="left:162.4px;top:99.0px;letter-spacing:0.17px;">done</span>
<span class="t" style="left:193.2px;top:99.0px;letter-spacing:0.90px;">(</span>
<span class="t" style="left:199.9px;top:99.0px;letter-spacing:-0.17px;">Degree=4</span>
<span class="t" style="left:256.4px;top:99.0px;">SubDFriendly=No</span>
<span class="t" style="left:356.9px;top:99.0px;letter-spacing:-0.09px;">PersistentClose=No</span>
<span class="t" style="left:466.9px;top:99.0px;letter-spacing:-0.20px;">Close</span>
<span class="t" style="left:501.4px;top:99.0px;letter-spacing:0.10px;">Sharp=No</span>
<span class="t" style="left:561.9px;top:99.0px;letter-spacing:-0.25px;">Undo</span>
<span class="t" style="left:592.4px;top:99.0px;letter-spacing:1.20px;">)</span>
<span class="t" style="left:8.4px;top:114.0px;letter-spacing:0.30px;">Next</span>
<span class="t" style="left:36.9px;top:114.0px;letter-spacing:-0.03px;">point.</span>
<span class="t" style="left:70.6px;top:114.0px;letter-spacing:-0.54px;">Press</span>
<span class="t" style="left:101.2px;top:114.0px;letter-spacing:-0.36px;">Enter</span>
<span class="t" style="left:131.2px;top:114.0px;letter-spacing:-0.12px;">when</span>
<span class="t" style="left:162.4px;top:114.0px;letter-spacing:0.17px;">done</span>
<span class="t" style="left:193.2px;top:114.0px;letter-spacing:0.90px;">(</span>
<span class="t" style="left:199.9px;top:114.0px;letter-spacing:-0.17px;">Degree=4</span>
<span class="t" style="left:256.4px;top:114.0px;">SubDFriendly=No</span>
<span class="t" style="left:356.9px;top:114.0px;letter-spacing:-0.09px;">PersistentClose=No</span>
<span class="t" style="left:466.9px;top:114.0px;letter-spacing:-0.20px;">Close</span>
<span class="t" style="left:501.4px;top:114.0px;letter-spacing:0.10px;">Sharp=No</span>
<span class="t" style="left:561.9px;top:114.0px;letter-spacing:-0.25px;">Undo</span>
<span class="t" style="left:592.4px;top:114.0px;letter-spacing:1.20px;">)</span>
<span class="t" style="left:8.4px;top:129.0px;letter-spacing:0.30px;">Next</span>
<span class="t" style="left:36.9px;top:129.0px;letter-spacing:-0.03px;">point.</span>
<span class="t" style="left:70.6px;top:129.0px;letter-spacing:-0.54px;">Press</span>
<span class="t" style="left:101.2px;top:129.0px;letter-spacing:-0.36px;">Enter</span>
<span class="t" style="left:131.2px;top:129.0px;letter-spacing:-0.12px;">when</span>
<span class="t" style="left:162.4px;top:129.0px;letter-spacing:0.17px;">done</span>
<span class="t" style="left:193.2px;top:129.0px;letter-spacing:0.90px;">(</span>
<span class="t" style="left:199.9px;top:129.0px;letter-spacing:-0.17px;">Degree=4</span>
<span class="t" style="left:256.4px;top:129.0px;">SubDFriendly=No</span>
<span class="t" style="left:356.9px;top:129.0px;letter-spacing:-0.09px;">PersistentClose=No</span>
<span class="t" style="left:466.9px;top:129.0px;letter-spacing:-0.20px;">Close</span>
<span class="t" style="left:501.4px;top:129.0px;letter-spacing:0.10px;">Sharp=No</span>
<span class="t" style="left:561.9px;top:129.0px;letter-spacing:-0.25px;">Undo</span>
<span class="t" style="left:592.4px;top:129.0px;letter-spacing:1.20px;">)</span>
<span class="t" style="left:8.4px;top:145.0px;font-weight:700;letter-spacing:-0.31px;">Command:</span>
<span class="t" style="left:17.4px;top:172.0px;color:#3b3b3b;letter-spacing:-0.06px;">Standard</span>
<span class="t" style="left:86.6px;top:172.0px;color:#3b3b3b;letter-spacing:-0.45px;">CPlanes</span>
<span class="t" style="left:149.6px;top:172.0px;color:#3b3b3b;letter-spacing:-0.34px;">Set View</span>
<span class="t" style="left:213.7px;top:172.0px;color:#3b3b3b;letter-spacing:-0.07px;">Display</span>
<span class="t" style="left:272.6px;top:172.0px;color:#3b3b3b;letter-spacing:-0.21px;">Select</span>
<span class="t" style="left:325.5px;top:172.0px;color:#3b3b3b;letter-spacing:0.08px;">Viewport Layout</span>
<span class="t" style="left:431.8px;top:172.0px;color:#3b3b3b;letter-spacing:0.16px;">Visibility</span>
<span class="t" style="left:496.4px;top:172.0px;color:#3b3b3b;letter-spacing:-0.03px;">Transform</span>
<span class="t" style="left:571.6px;top:172.0px;color:#3b3b3b;letter-spacing:-0.10px;">Curve Tools</span>
<span class="t" style="left:652.3px;top:172.0px;color:#3b3b3b;letter-spacing:-0.11px;">Surface Tools</span>
<span class="t" style="left:742.4px;top:172.0px;color:#3b3b3b;letter-spacing:0.03px;">Solid Tools</span>
<span class="t" style="left:819.6px;top:172.0px;color:#3b3b3b;letter-spacing:-0.10px;">SubD Tools</span>
<span class="t" style="left:898.8px;top:172.0px;color:#3b3b3b;letter-spacing:0.03px;">Mesh Tools</span>
<span class="t" style="left:978.9px;top:172.0px;color:#3b3b3b;letter-spacing:-0.16px;">Render Tools</span>
<span class="t" style="left:1068.0px;top:172.0px;color:#3b3b3b;letter-spacing:0.15px;">Drafting</span>
<span class="t" style="left:1131.1px;top:172.0px;color:#3b3b3b;letter-spacing:-0.08px;">New in V7</span>
<span class="t" style="left:10.4px;top:251.0px;font-weight:700;color:#1c1c28;letter-spacing:-0.30px;">Top</span>
<span class="t" style="left:11.4px;top:898.0px;color:#3b3b3b;letter-spacing:-0.18px;">Perspective</span>
<span class="t" style="left:85.4px;top:898.0px;color:#3b3b3b;letter-spacing:0.28px;">Top</span>
<span class="t" style="left:120.9px;top:898.0px;color:#3b3b3b;letter-spacing:0.14px;">Front</span>
<span class="t" style="left:163.4px;top:898.0px;color:#3b3b3b;letter-spacing:0.24px;">Right</span>
<span class="t" style="left:25.9px;top:924.0px;color:#3b3b3b;letter-spacing:-0.39px;">End</span>
<span class="t" style="left:68.9px;top:924.0px;color:#3b3b3b;letter-spacing:-0.08px;">Near</span>
<span class="t" style="left:116.4px;top:924.0px;color:#3b3b3b;letter-spacing:0.37px;">Point</span>
<span class="t" style="left:168.4px;top:924.0px;color:#3b3b3b;letter-spacing:0.45px;">Mid</span>
<span class="t" style="left:211.9px;top:924.0px;color:#3b3b3b;letter-spacing:-0.27px;">Cen</span>
<span class="t" style="left:255.4px;top:924.0px;color:#3b3b3b;letter-spacing:0.62px;">Int</span>
<span class="t" style="left:292.9px;top:924.0px;color:#3b3b3b;letter-spacing:-0.29px;">Perp</span>
<span class="t" style="left:339.4px;top:924.0px;color:#3b3b3b;letter-spacing:-0.22px;">Tan</span>
<span class="t" style="left:381.4px;top:924.0px;color:#3b3b3b;letter-spacing:-0.04px;">Quad</span>
<span class="t" style="left:433.9px;top:924.0px;color:#3b3b3b;letter-spacing:0.25px;">Knot</span>
<span class="t" style="left:481.9px;top:924.0px;color:#3b3b3b;letter-spacing:-0.39px;">Vertex</span>
<span class="t" style="left:537.9px;top:924.0px;color:#3b3b3b;letter-spacing:-0.09px;">Project</span>
<span class="t" style="left:605.4px;top:924.0px;color:#3b3b3b;letter-spacing:-0.26px;">Disable</span>
<span class="t" style="left:6.9px;top:948.0px;color:#3b3b3b;letter-spacing:-0.28px;">CPlane</span>
<span class="t" style="left:73.4px;top:948.0px;color:#3b3b3b;letter-spacing:-0.42px;">x 75.883</span>
<span class="t" style="left:160.9px;top:948.0px;color:#3b3b3b;letter-spacing:-0.36px;">y 59.543</span>
<span class="t" style="left:262.9px;top:948.0px;color:#3b3b3b;letter-spacing:0.06px;">z 0</span>
<span class="t" style="left:326.9px;top:948.0px;color:#3b3b3b;letter-spacing:-0.04px;">Centimeters</span>
<span class="t" style="left:421.9px;top:948.0px;color:#3b3b3b;letter-spacing:-0.05px;">Default</span>
<span class="t" style="left:575.9px;top:948.0px;font-weight:700;color:#3b3b3b;letter-spacing:-0.40px;">Grid Snap</span>
<span class="t" style="left:643.4px;top:948.0px;color:#3b3b3b;letter-spacing:0.04px;">Ortho</span>
<span class="t" style="left:687.4px;top:948.0px;color:#3b3b3b;">Planar</span>
<span class="t" style="left:734.4px;top:948.0px;font-weight:700;color:#3b3b3b;letter-spacing:-0.43px;">Osnap</span>
<span class="t" style="left:779.4px;top:948.0px;font-weight:700;color:#3b3b3b;">SmartTrack</span>
<span class="t" style="left:854.4px;top:948.0px;font-weight:700;color:#3b3b3b;letter-spacing:-0.05px;">Gumball</span>
<span class="t" style="left:914.4px;top:948.0px;color:#3b3b3b;">Record History</span>
<span class="t" style="left:1006.9px;top:948.0px;color:#3b3b3b;">Filter</span>
<span class="t" style="left:1040.9px;top:948.0px;color:#3b3b3b;letter-spacing:-0.48px;">CPU use: 1.1 %</span>
<span class="t" style="left:967.8px;top:262.0px;color:#1a1a1a;letter-spacing:-0.10px;">Properties</span>
<span class="t" style="left:1054.8px;top:262.0px;color:#1a1a1a;letter-spacing:-0.09px;">Display</span>
<span class="t" style="left:1126.8px;top:262.0px;color:#1a1a1a;letter-spacing:-0.06px;">Environments</span>
<span class="t" style="left:953.7px;top:324.5px;font-size:13.3px;color:#2a2a2a;letter-spacing:0.50px;">Viewport</span>
<span class="t" style="left:953.9px;top:455.5px;font-size:13.3px;color:#2a2a2a;letter-spacing:-0.03px;">Camera</span>
<span class="t" style="left:972.8px;top:348.0px;color:#1a1a1a;letter-spacing:0.17px;">Title</span>
<span class="t" style="left:1110.4px;top:348.0px;color:#1a1a1a;letter-spacing:0.15px;">Top</span>
<span class="t" style="left:972.8px;top:369.0px;color:#6d6d6d;letter-spacing:0.34px;">Width</span>
<span class="t" style="left:1110.4px;top:369.0px;color:#1a1a1a;letter-spacing:-0.31px;">934</span>
<span class="t" style="left:972.8px;top:390.0px;color:#6d6d6d;letter-spacing:0.32px;">Height</span>
<span class="t" style="left:1110.4px;top:390.0px;color:#1a1a1a;letter-spacing:-0.31px;">644</span>
<span class="t" style="left:972.8px;top:411.0px;color:#1a1a1a;letter-spacing:0.12px;">Projection</span>
<span class="t" style="left:1110.4px;top:411.0px;color:#1a1a1a;letter-spacing:-0.24px;">Parallel</span>
<span class="t" style="left:972.8px;top:432.0px;color:#1a1a1a;letter-spacing:-0.08px;">Locked</span>
<span class="t" style="left:972.8px;top:479.0px;color:#6d6d6d;letter-spacing:0.02px;">Lens Length(mm)</span>
<span class="t" style="left:1110.4px;top:479.0px;color:#1a1a1a;letter-spacing:-0.24px;">50.0</span>
<span class="t" style="left:972.8px;top:500.0px;color:#1a1a1a;letter-spacing:0.06px;">Rotation</span>
<span class="t" style="left:1110.4px;top:500.0px;color:#1a1a1a;letter-spacing:-0.26px;">0.0</span>
<span class="t" style="left:972.8px;top:521.0px;color:#1a1a1a;letter-spacing:-0.05px;">X Location</span>
<span class="t" style="left:1110.4px;top:521.0px;color:#1a1a1a;letter-spacing:-0.47px;">12.935</span>
<span class="t" style="left:972.8px;top:542.0px;color:#1a1a1a;letter-spacing:-0.03px;">Y Location</span>
<span class="t" style="left:1110.4px;top:542.0px;color:#1a1a1a;letter-spacing:-0.39px;">1.738</span>
<span class="t" style="left:972.8px;top:563.0px;color:#1a1a1a;">Z Location</span>
<span class="t" style="left:1110.4px;top:563.0px;color:#1a1a1a;letter-spacing:-0.47px;">31.494</span>
<span class="t" style="left:972.8px;top:584.0px;color:#1a1a1a;letter-spacing:-0.17px;height:10.0px;overflow:hidden;">Distance to Target</span>
<span class="t" style="left:1110.4px;top:584.0px;color:#1a1a1a;letter-spacing:-0.47px;height:10.0px;overflow:hidden;">31.494</span>
<span class="t" style="left:948.0px;top:604.0px;color:#2a2a2a;letter-spacing:-0.49px;">Layers</span>
<span class="t" style="left:950.8px;top:680.0px;color:#1a1a1a;letter-spacing:-0.25px;">Layer</span>
<span class="t" style="left:1196.7px;top:680.0px;color:#1a1a1a;letter-spacing:0.15px;">Material</span>
<span class="t" style="left:1277.2px;top:680.0px;color:#1a1a1a;width:5.8px;overflow:hidden;">L</span>
<span class="t" style="left:953.7px;top:702.0px;font-weight:700;color:#1a1a1a;letter-spacing:0.23px;">Default</span>
<span class="t" style="left:1274.9px;top:702.0px;font-weight:700;color:#1a1a1a;width:8.1px;overflow:hidden;">C</span>
<span class="t" style="left:953.7px;top:721.0px;color:#1a1a1a;letter-spacing:-0.48px;">Layer 01</span>
<span class="t" style="left:1274.9px;top:721.0px;color:#1a1a1a;width:8.1px;overflow:hidden;">C</span>
<span class="t" style="left:953.7px;top:740.0px;color:#1a1a1a;letter-spacing:-0.48px;">Layer 02</span>
<span class="t" style="left:1274.9px;top:740.0px;color:#1a1a1a;width:8.1px;overflow:hidden;">C</span>
<span class="t" style="left:953.7px;top:759.0px;color:#1a1a1a;letter-spacing:-0.48px;">Layer 03</span>
<span class="t" style="left:1274.9px;top:759.0px;color:#1a1a1a;width:8.1px;overflow:hidden;">C</span>
<span class="t" style="left:953.7px;top:778.0px;color:#1a1a1a;letter-spacing:-0.48px;">Layer 04</span>
<span class="t" style="left:1274.9px;top:778.0px;color:#1a1a1a;width:8.1px;overflow:hidden;">C</span>
<span class="t" style="left:953.7px;top:797.0px;color:#1a1a1a;letter-spacing:-0.48px;">Layer 05</span>
<span class="t" style="left:1274.9px;top:797.0px;color:#1a1a1a;width:8.1px;overflow:hidden;">C</span>
<span class="t" style="left:42.0px;top:815.0px;color:#3e4248;letter-spacing:1.00px;">y</span>
<span class="t" style="left:71.8px;top:847.0px;color:#3e4248;letter-spacing:1.10px;">x</span>
</body></html>
